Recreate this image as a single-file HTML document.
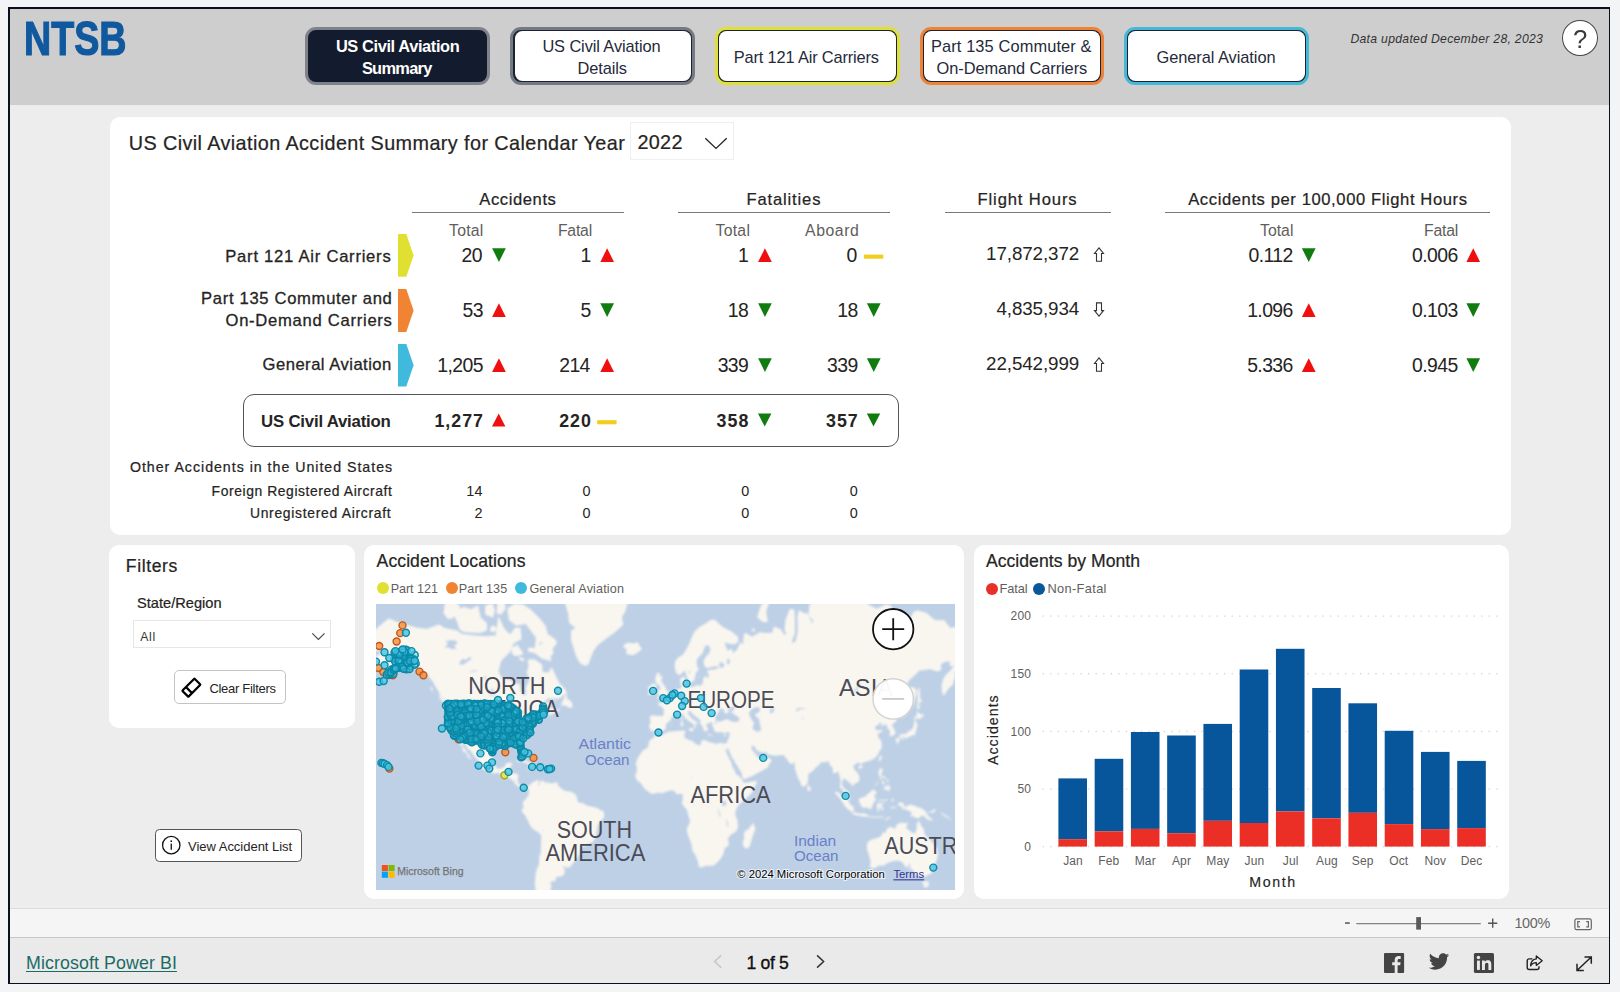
<!DOCTYPE html>
<html lang="en"><head><meta charset="utf-8"><title>NTSB US Civil Aviation Accident Summary</title>
<style>
html,body{margin:0;padding:0}
body{width:1620px;height:992px;overflow:hidden;background:#f3f4f6;position:relative;font-family:"Liberation Sans",sans-serif}
#frame{position:absolute;left:8px;top:7px;width:1599px;height:974px;border-style:solid;border-color:#0b1020;border-width:2px 1px 1px 2px}
.t{position:absolute;white-space:nowrap;line-height:normal;display:block}
svg{overflow:visible}
</style></head>
<body>
<div id="frame"></div>
<div style="position:absolute;left:10px;top:9px;width:1599px;height:96px;background:#cecece"></div>
<div style="position:absolute;left:10px;top:105px;width:1599px;height:803.5px;background:#ededed"></div>
<div style="position:absolute;left:10px;top:908px;width:1599px;height:29.5px;background:#f5f5f5;border-top:1px solid #dcdcdc;box-sizing:border-box"></div>
<div style="position:absolute;left:10px;top:937px;width:1599px;height:46px;background:#eaeaea;border-top:1px solid #c8c8c8;box-sizing:border-box"></div>
<div style="position:absolute;left:110px;top:116.5px;width:1401px;height:418px;background:#fff;border-radius:10px"></div>
<div style="position:absolute;left:108.6px;top:545px;width:246.5px;height:182.8px;background:#fff;border-radius:10px"></div>
<div style="position:absolute;left:364.3px;top:545px;width:600px;height:354px;background:#fff;border-radius:10px"></div>
<div style="position:absolute;left:974.3px;top:545px;width:534.8px;height:354px;background:#fff;border-radius:10px"></div>
<div style="position:absolute;left:305.3px;top:26.8px;width:185.09999999999997px;height:58.60000000000001px;box-sizing:border-box;border:3px solid #7f828a;border-radius:11px;background:#131c2e"></div>
<div style="position:absolute;left:510.4px;top:26.8px;width:184.70000000000005px;height:58.60000000000001px;box-sizing:border-box;border:3px solid #747a82;border-radius:11px;background:#1c2333"></div>
<div style="position:absolute;left:514.5px;top:30.9px;width:176.50000000000006px;height:50.400000000000006px;border-radius:7.5px;background:#fff"></div>
<div style="position:absolute;left:715.1px;top:26.8px;width:184.69999999999993px;height:58.60000000000001px;box-sizing:border-box;border:3px solid #dfe03a;border-radius:11px;background:#1c2333"></div>
<div style="position:absolute;left:719.2px;top:30.9px;width:176.49999999999994px;height:50.400000000000006px;border-radius:7.5px;background:#fff"></div>
<div style="position:absolute;left:919.5px;top:26.8px;width:184.5999999999999px;height:58.60000000000001px;box-sizing:border-box;border:3px solid #ee8336;border-radius:11px;background:#1c2333"></div>
<div style="position:absolute;left:923.6px;top:30.9px;width:176.39999999999992px;height:50.400000000000006px;border-radius:7.5px;background:#fff"></div>
<div style="position:absolute;left:1124.1px;top:26.8px;width:185.0px;height:58.60000000000001px;box-sizing:border-box;border:3px solid #45b8d8;border-radius:11px;background:#1c2333"></div>
<div style="position:absolute;left:1128.1999999999998px;top:30.9px;width:176.8px;height:50.400000000000006px;border-radius:7.5px;background:#fff"></div>
<div style="position:absolute;left:1561.6px;top:19.5px;width:36.6px;height:36.4px;box-sizing:border-box;border:1.2px solid #444;border-radius:50%;background:#fff"></div>
<div style="position:absolute;left:630.4px;top:122.4px;width:104px;height:37.3px;box-sizing:border-box;border:1px solid #efefef;background:#fff"></div>
<svg style="position:absolute;left:700px;top:132px" width="32" height="22" viewBox="700 132 32 22"><polyline points="705.3,138.2 716,148.4 726.7,138.2" fill="none" stroke="#252423" stroke-width="1.3"/></svg>
<div style="position:absolute;left:411.5px;top:211.8px;width:212.20000000000005px;height:1.3px;background:#7a7a7a"></div>
<div style="position:absolute;left:678px;top:211.8px;width:212px;height:1.3px;background:#7a7a7a"></div>
<div style="position:absolute;left:945.4px;top:211.8px;width:165.19999999999993px;height:1.3px;background:#7a7a7a"></div>
<div style="position:absolute;left:1165.1px;top:211.8px;width:324.9000000000001px;height:1.3px;background:#7a7a7a"></div>
<svg style="position:absolute;left:396px;top:233px" width="20" height="44.80000000000001" viewBox="396 233 20 44.80000000000001"><polygon points="398,234 406.3,234 413.6,255.4 406.3,276.8 398,276.8" fill="#dfe02f"/></svg>
<svg style="position:absolute;left:396px;top:287.9px" width="20" height="45.10000000000002" viewBox="396 287.9 20 45.10000000000002"><polygon points="398,288.9 406.3,288.9 413.6,310.45 406.3,332 398,332" fill="#f08432"/></svg>
<svg style="position:absolute;left:396px;top:343.2px" width="20" height="44.60000000000002" viewBox="396 343.2 20 44.60000000000002"><polygon points="398,344.2 406.3,344.2 413.6,365.5 406.3,386.8 398,386.8" fill="#3fb9dc"/></svg>
<div style="position:absolute;left:242.8px;top:394.3px;width:656px;height:52.8px;box-sizing:border-box;border:1.1px solid #555;border-radius:11px"></div>
<svg style="position:absolute;left:400px;top:230px" width="1100" height="220" viewBox="400 230 1100 220"><polygon points="492.09999999999997,248.3 505.79999999999995,248.3 498.94999999999993,261.9" fill="#107c10"/><polygon points="600.3000000000001,261.9 614.0,261.9 607.1500000000001,248.3" fill="#f00f0f"/><polygon points="758.1,261.9 771.8,261.9 764.95,248.3" fill="#f00f0f"/><rect x="863.9" y="254.6" width="19.4" height="4.1" fill="#f2cd1e"/><polygon points="1099.0,247.9 1103.5,253.5 1101.5,253.5 1101.5,261.2 1096.5,261.2 1096.5,253.5 1094.5,253.5" fill="#fff" stroke="#333" stroke-width="1.1" stroke-linejoin="miter"/><polygon points="1301.9,248.3 1315.6000000000001,248.3 1308.75,261.9" fill="#107c10"/><polygon points="1466.4,261.9 1480.1000000000001,261.9 1473.25,248.3" fill="#f00f0f"/><polygon points="492.09999999999997,316.9 505.79999999999995,316.9 498.94999999999993,303.3" fill="#f00f0f"/><polygon points="600.3000000000001,303.3 614.0,303.3 607.1500000000001,316.9" fill="#107c10"/><polygon points="758.1,303.3 771.8,303.3 764.95,316.9" fill="#107c10"/><polygon points="866.9000000000001,303.3 880.6,303.3 873.75,316.9" fill="#107c10"/><polygon points="1099.0,316.2 1103.5,310.6 1101.5,310.6 1101.5,302.9 1096.5,302.9 1096.5,310.6 1094.5,310.6" fill="#fff" stroke="#333" stroke-width="1.1" stroke-linejoin="miter"/><polygon points="1301.9,316.9 1315.6000000000001,316.9 1308.75,303.3" fill="#f00f0f"/><polygon points="1466.4,303.3 1480.1000000000001,303.3 1473.25,316.9" fill="#107c10"/><polygon points="492.09999999999997,371.9 505.79999999999995,371.9 498.94999999999993,358.3" fill="#f00f0f"/><polygon points="600.3000000000001,371.9 614.0,371.9 607.1500000000001,358.3" fill="#f00f0f"/><polygon points="758.1,358.3 771.8,358.3 764.95,371.9" fill="#107c10"/><polygon points="866.9000000000001,358.3 880.6,358.3 873.75,371.9" fill="#107c10"/><polygon points="1099.0,357.9 1103.5,363.5 1101.5,363.5 1101.5,371.2 1096.5,371.2 1096.5,363.5 1094.5,363.5" fill="#fff" stroke="#333" stroke-width="1.1" stroke-linejoin="miter"/><polygon points="1301.9,371.9 1315.6000000000001,371.9 1308.75,358.3" fill="#f00f0f"/><polygon points="1466.4,358.3 1480.1000000000001,358.3 1473.25,371.9" fill="#107c10"/><polygon points="492.0,426.6 505.4,426.6 498.7,413.6" fill="#f00f0f"/><rect x="597.2" y="420.2" width="19.4" height="4.1" fill="#f2cd1e"/><polygon points="758.0,413.6 771.4,413.6 764.7,426.6" fill="#107c10"/><polygon points="866.8000000000001,413.6 880.2,413.6 873.5,426.6" fill="#107c10"/></svg>
<div style="position:absolute;left:133.3px;top:620.1px;width:198.2px;height:28px;box-sizing:border-box;border:1px solid #e6e6e6;background:#fff"></div>
<svg style="position:absolute;left:308px;top:628px" width="22" height="16" viewBox="308 628 22 16"><polyline points="312.3,633.4 318.4,639.4 324.5,633.4" fill="none" stroke="#444" stroke-width="1.1"/></svg>
<div style="position:absolute;left:174.3px;top:670.4px;width:111.3px;height:34.1px;box-sizing:border-box;border:1.4px solid #c4c4c4;border-radius:5px;background:#fff"></div>
<svg style="position:absolute;left:178px;top:674px" width="28" height="28" viewBox="178 674 28 28"><g transform="translate(191.4,687.7) rotate(-45)" fill="none" stroke="#000" stroke-width="2.2"><rect x="-8.6" y="-4.3" width="17.2" height="8.6" rx="0.6"/><line x1="-3.4" y1="-4.3" x2="-3.4" y2="4.3"/></g></svg>
<div style="position:absolute;left:155px;top:829.2px;width:147px;height:33px;box-sizing:border-box;border:1.3px solid #555;border-radius:4.5px;background:#fff"></div>
<svg style="position:absolute;left:160px;top:834px" width="24" height="24" viewBox="160 834 24 24"><circle cx="171.25" cy="845.15" r="8.7" fill="none" stroke="#111" stroke-width="1.3"/><rect x="170.6" y="843.6" width="1.3" height="6.2" fill="#111"/><rect x="170.5" y="840.4" width="1.5" height="1.6" fill="#111"/></svg>
<div style="position:absolute;left:376.8px;top:582.4px;width:12px;height:12px;border-radius:50%;background:#dfe02f"></div>
<div style="position:absolute;left:445.5px;top:582.4px;width:12px;height:12px;border-radius:50%;background:#f08432"></div>
<div style="position:absolute;left:514.8px;top:582.4px;width:12px;height:12px;border-radius:50%;background:#3fb9dc"></div>
<svg style="position:absolute;left:376px;top:604px;overflow:hidden;font-family:&quot;Liberation Sans&quot;,sans-serif" width="579" height="286" viewBox="376 604 579 286"><defs><filter id="soft" x="-5%" y="-5%" width="110%" height="110%"><feGaussianBlur stdDeviation="1.0"/></filter></defs>
<g filter="url(#soft)"><rect x="356" y="584" width="619" height="326" fill="#bdd0e6"/>
<path d="M368.2,646.2 371.7,634.0 377.1,628.1 388.6,618.5 400.1,622.9 416.0,627.6 426.7,629.1 439.1,624.5 444.4,628.1 456.8,630.6 462.1,634.0 474.5,635.4 485.2,636.3 495.8,635.4 498.4,615.7 503.8,628.1 510.0,634.4 515.3,627.6 520.6,628.1 521.5,639.1 513.5,643.6 510.0,652.1 501.1,660.7 498.4,671.5 502.0,678.2 510.0,679.8 515.3,683.6 519.7,684.2 520.6,690.5 523.3,695.5 525.9,694.9 525.9,687.6 529.5,679.8 526.8,672.5 528.6,666.2 527.7,659.5 534.8,659.5 541.9,664.4 542.7,672.2 548.9,672.2 551.6,666.9 556.0,676.5 559.6,683.6 564.9,689.1 567.0,693.5 563.1,695.5 559.6,698.5 548.1,698.5 544.5,701.8 541.0,706.3 542.7,705.0 550.7,701.3 552.0,702.6 549.8,705.3 551.3,708.4 553.4,709.7 556.9,710.4 559.6,707.6 558.7,711.0 552.5,714.0 548.9,715.7 548.9,713.5 551.1,711.2 547.2,712.2 541.9,715.4 540.6,718.3 541.9,720.0 539.2,721.0 534.8,722.8 534.4,725.4 532.1,727.7 531.2,731.0 531.8,734.3 528.6,736.9 525.0,739.7 522.4,742.8 521.8,745.9 523.8,752.0 523.8,755.3 522.4,755.7 521.0,753.4 519.4,750.4 519.2,747.6 517.1,745.9 514.4,746.3 510.8,745.1 507.3,745.5 507.7,747.8 504.6,747.4 499.7,746.5 497.6,747.6 494.0,750.4 493.5,754.0 492.8,757.9 492.6,761.1 494.0,764.6 495.8,767.0 498.4,768.9 502.9,768.0 505.2,766.5 505.7,763.6 510.0,762.5 512.1,763.1 510.8,766.5 510.0,768.3 509.4,772.0 508.5,773.3 513.5,773.2 517.9,774.3 518.1,776.6 517.6,781.2 518.8,783.9 520.6,785.7 524.1,785.3 525.9,784.8 528.6,786.2 528.7,788.0 527.3,786.9 525.0,785.9 523.6,787.1 523.3,788.7 521.1,788.0 518.8,786.9 517.6,786.0 515.3,783.9 513.9,782.1 510.8,778.5 507.3,777.6 503.8,776.6 500.2,773.5 497.9,772.6 494.9,773.5 490.5,771.9 486.0,770.2 482.1,768.3 479.0,765.5 479.3,762.7 477.2,759.2 473.6,755.3 471.9,752.6 470.1,750.2 467.1,748.0 465.7,743.9 462.7,742.4 462.7,745.9 465.7,750.0 468.3,754.0 470.1,757.3 471.9,759.4 470.6,759.4 467.4,756.5 466.9,753.6 463.5,751.6 462.1,750.0 463.0,748.2 460.7,745.3 459.1,742.4 458.2,740.5 456.1,738.0 452.4,736.5 449.9,731.9 448.8,729.3 446.5,725.4 445.6,723.3 445.8,719.5 446.2,713.5 446.2,709.2 444.9,703.4 447.9,704.0 448.8,705.8 448.7,702.4 447.6,701.0 444.4,698.3 440.0,696.3 439.1,692.0 435.5,686.7 433.8,683.0 430.2,678.2 425.8,673.2 422.2,672.2 418.2,669.0 410.7,668.0 406.3,665.1 402.8,668.0 400.1,669.7 396.9,670.4 397.4,666.2 400.1,663.7 396.6,665.1 393.9,669.7 392.1,672.2 388.6,677.2 385.0,680.7 380.6,683.6 376.2,685.1 378.8,682.0 382.4,679.8 385.9,675.5 387.2,672.2 384.2,672.8 378.8,672.5 378.8,668.0 374.4,666.2 371.7,661.8 373.5,657.6 376.2,656.1 380.6,653.7 380.6,650.8 377.1,650.8 371.7,650.4ZM447.1,703.4 443.5,702.1 438.6,697.4 440.9,696.9 444.4,699.1 446.7,701.8ZM433.4,692.9 431.1,690.0 430.2,687.3 432.4,687.6 432.4,690.5ZM392.1,676.5 395.7,674.9 396.0,677.2 393.4,678.8ZM550.7,661.1 541.9,658.4 534.8,652.9 527.7,651.6 528.6,647.5 534.8,647.9 536.0,637.7 529.5,629.1 525.9,623.9 516.2,625.5 509.1,620.2 507.3,608.7 514.4,603.8 523.3,604.4 531.2,609.9 540.1,619.1 545.4,625.5 547.7,634.0 556.0,640.0 556.9,643.2 552.5,648.7 553.4,652.9 550.4,656.8 551.3,659.5ZM486.9,630.6 479.8,633.0 471.0,632.5 463.9,632.0 459.5,629.6 457.7,622.9 455.0,617.4 457.7,609.9 463.9,606.9 471.0,609.3 478.1,605.6 480.7,617.4 486.9,622.9ZM447.9,619.1 443.5,612.9 445.3,601.2 453.3,599.9 460.3,606.9 456.8,614.6 452.4,618.5ZM493.1,617.4 485.2,614.6 485.2,605.6 492.2,603.1 494.9,609.9ZM496.7,613.5 501.1,614.6 505.5,608.7 504.6,601.2 497.6,601.2ZM489.6,630.6 494.0,632.5 496.7,629.6 494.9,626.0 491.4,626.0ZM458.6,595.8 471.0,599.2 478.1,595.8 478.1,586.5 467.4,585.0 458.6,588.8ZM502.9,597.9 524.1,598.5 524.1,590.2 510.0,585.0 502.9,588.8ZM511.7,647.5 515.3,646.2 517.1,644.5 521.5,650.8 523.3,654.1 518.8,655.7 514.4,655.7 511.7,652.9ZM518.8,657.2 521.5,657.2 524.5,659.5 523.3,661.4 519.7,659.5ZM560.8,705.5 562.6,701.3 564.9,696.3 567.4,694.6 566.7,699.1 570.2,700.5 572.0,703.2 572.5,706.3 571.1,708.1 567.6,707.1 565.8,705.5ZM551.6,699.4 556.0,700.7 556.6,701.5 553.4,701.0ZM552.0,707.6 556.0,708.4 555.1,709.7 552.5,708.9ZM585.3,665.8 580.0,663.3 576.4,656.8 573.8,648.7 571.1,640.0 571.1,630.6 575.5,628.1 569.3,622.9 568.4,614.6 564.9,602.5 559.6,588.8 545.4,587.3 538.3,573.0 559.6,531.6 612.7,510.5 634.0,554.3 631.3,588.8 628.7,599.2 625.1,611.7 621.6,617.4 623.4,624.5 614.5,632.5 605.7,638.7 597.7,645.3 593.2,651.6 590.1,659.5 588.3,664.4ZM622.8,646.6 626.9,642.7 634.0,643.6 637.5,642.3 640.0,646.6 641.8,648.7 639.3,651.6 633.1,655.3 626.0,653.7 626.9,649.6ZM515.3,761.9 518.8,759.8 522.4,759.4 525.9,760.8 529.5,762.3 532.1,764.0 534.4,765.1 533.0,765.7 528.2,765.9 529.1,764.4 526.8,763.6 524.1,762.3 521.0,761.3 517.9,761.3 516.2,762.1ZM534.1,768.5 536.5,768.9 539.2,769.8 541.9,768.7 544.5,768.9 544.9,768.1 542.7,766.8 541.0,765.9 538.8,765.9 535.8,765.9 536.9,766.8 537.6,768.1 535.7,768.1ZM527.0,768.7 530.7,768.9 530.9,769.5 529.1,769.8 527.2,769.1ZM546.8,768.3 549.7,768.5 549.5,769.3 546.8,769.4ZM528.7,786.2 532.1,782.8 533.4,781.9 538.3,779.9 539.6,782.1 541.9,781.0 541.9,779.9 544.9,782.4 548.9,782.8 551.6,783.5 556.0,782.6 557.8,784.8 558.7,786.6 562.2,789.3 564.9,791.0 570.2,791.4 573.8,793.2 575.5,794.6 577.3,798.5 577.3,801.7 580.0,802.9 582.6,802.9 587.0,805.8 592.4,806.8 597.7,808.3 600.3,810.2 603.3,811.1 604.2,814.5 603.9,817.7 600.3,821.3 597.7,824.9 596.8,829.5 596.4,834.1 595.0,837.9 593.2,841.7 589.7,843.6 586.2,845.1 582.6,846.9 580.0,849.4 579.6,854.0 577.3,857.5 573.8,862.0 571.1,865.8 568.4,867.8 564.9,866.9 562.6,866.3 564.9,870.2 564.0,874.6 561.4,876.2 556.0,876.9 555.5,881.0 550.7,881.5 550.7,885.1 551.6,886.3 549.8,891.2 546.3,893.7 548.9,897.6 546.3,902.9 543.6,907.1 544.9,911.4 541.9,911.4 540.1,915.2 535.7,911.4 533.0,907.1 532.1,900.2 533.9,895.8 535.7,888.7 534.8,883.9 535.3,879.2 535.7,873.5 536.9,869.1 539.2,863.7 539.2,857.5 541.0,851.4 541.0,844.6 541.3,837.9 541.2,834.7 538.3,832.3 533.0,829.1 530.7,826.4 529.1,823.1 526.8,818.6 525.0,815.0 522.4,812.4 521.8,809.3 523.6,807.7 524.1,806.1 522.4,805.6 523.3,802.6 524.1,800.3 526.3,799.0 526.8,797.3 528.6,795.5 528.9,791.9 528.6,789.3ZM556.2,782.6 558.0,782.4 557.8,783.7 556.2,783.7ZM655.4,733.7 662.4,735.0 667.7,732.1 671.2,731.5 678.3,731.0 683.6,730.4 685.4,731.0 684.5,734.3 684.0,736.9 685.4,738.6 688.9,739.9 693.0,741.2 694.3,743.3 697.8,744.9 700.5,745.3 701.3,742.8 701.3,740.7 704.9,739.9 707.5,741.4 710.2,742.4 713.7,743.3 717.3,743.9 719.9,742.8 722.6,743.3 723.5,745.9 725.3,750.0 727.0,754.0 728.8,757.9 731.5,762.7 732.0,766.5 734.1,769.3 735.9,773.9 738.6,775.7 741.6,779.0 742.6,780.8 743.9,783.0 747.4,782.4 752.7,781.5 756.6,780.6 756.3,783.0 754.5,787.5 752.7,791.0 751.0,793.7 747.4,797.3 743.9,799.9 741.2,802.6 738.6,805.2 736.8,807.9 735.9,810.6 735.0,813.8 735.9,816.8 737.5,820.4 737.8,824.9 737.8,828.6 735.0,832.3 731.5,834.1 728.8,836.9 727.6,838.8 728.6,841.7 728.6,845.5 724.4,848.5 724.0,851.4 722.6,855.4 719.9,859.5 716.4,863.3 713.7,865.2 711.1,865.8 705.8,865.8 701.3,867.6 698.7,866.5 698.3,862.7 696.9,858.5 695.1,854.4 692.5,850.4 691.6,844.6 690.7,841.7 688.0,835.1 686.8,830.4 688.0,825.8 689.8,823.1 690.2,820.4 688.9,817.4 687.7,812.4 686.8,809.7 683.6,806.1 681.8,803.5 682.7,799.9 682.7,796.4 683.1,794.6 681.0,793.7 678.3,794.1 676.5,794.1 674.8,791.4 672.1,790.3 668.0,790.9 664.1,792.5 662.4,793.2 660.6,792.7 657.9,792.5 652.6,793.9 650.0,792.8 645.5,789.6 642.9,786.6 642.0,784.4 639.3,782.1 636.3,779.6 636.1,777.6 634.9,775.4 636.7,773.0 637.0,769.3 636.7,766.5 635.8,763.6 637.5,758.8 639.7,754.9 642.9,750.4 646.4,748.4 648.2,746.9 648.7,743.9 649.4,740.7 652.6,738.4 654.4,736.9ZM753.3,823.1 755.4,829.5 753.6,833.2 751.8,838.8 750.1,844.6 749.2,847.5 746.0,848.5 743.9,847.1 742.6,842.6 744.4,838.3 743.9,835.1 744.8,831.0 748.3,829.5 751.0,825.8ZM656.0,733.2 658.1,731.7 662.4,731.5 664.7,729.7 666.3,727.0 665.4,725.4 667.3,722.4 669.8,721.0 671.6,718.8 671.2,716.7 673.0,715.9 675.3,716.4 677.4,716.9 679.2,715.2 681.5,713.7 684.0,714.9 684.5,717.4 686.6,719.1 687.7,720.3 689.8,721.4 691.2,722.4 693.7,724.2 694.3,726.5 693.7,728.8 695.1,727.7 696.2,726.5 695.3,724.9 696.0,723.1 698.5,724.2 697.8,722.6 694.3,720.7 694.3,719.8 691.9,719.1 690.0,715.9 687.9,714.2 687.7,711.5 690.2,710.4 690.0,712.2 691.6,711.7 692.8,714.2 695.1,715.9 697.8,718.1 700.3,720.0 700.3,723.1 701.3,724.9 703.1,727.2 703.6,729.9 704.9,731.5 706.3,732.1 706.8,729.9 708.4,729.5 707.5,727.7 706.3,725.9 706.1,723.3 708.4,724.2 709.3,722.1 712.0,722.4 712.5,724.0 712.3,725.4 713.4,727.7 714.3,729.9 714.6,731.5 716.4,731.7 718.2,732.8 720.3,731.5 723.5,733.0 726.1,732.4 728.8,731.9 729.9,733.2 729.5,735.4 729.3,736.7 728.5,738.6 727.7,740.7 727.0,742.8 725.3,743.7 723.1,743.5 723.5,746.1 725.3,749.6 726.5,750.4 727.9,746.9 728.8,750.0 730.6,754.0 731.8,757.3 734.1,760.2 735.2,762.7 737.7,766.5 739.4,769.6 741.6,772.4 742.1,775.7 743.0,779.0 745.6,778.8 751.0,776.6 754.5,774.8 758.4,772.6 761.6,771.1 764.2,769.3 768.1,767.4 768.7,764.6 771.9,760.8 769.9,758.6 766.9,757.5 765.8,755.9 765.8,753.4 765.1,754.4 763.7,755.5 761.6,757.5 758.0,757.9 757.2,756.9 757.3,754.4 756.3,754.0 755.7,755.9 754.9,754.4 754.5,752.6 752.7,750.8 751.8,749.0 751.0,746.9 752.0,745.9 753.6,745.7 755.4,747.6 756.3,750.0 758.9,751.2 762.5,752.8 765.7,751.8 766.9,752.6 768.3,754.7 771.3,755.1 775.1,755.7 779.3,755.3 783.7,755.1 784.6,756.3 786.4,758.5 788.2,761.1 790.5,764.0 793.5,763.6 794.5,761.3 794.9,763.6 794.9,767.4 795.8,771.1 796.7,773.9 798.3,778.5 800.2,781.5 801.1,784.8 803.2,787.3 804.5,785.9 806.2,785.1 807.3,783.3 808.2,778.5 808.0,774.3 810.3,772.4 811.7,771.7 814.7,768.7 816.5,766.8 819.2,765.0 820.1,762.7 822.7,762.3 826.3,761.7 828.6,761.1 829.5,764.2 831.6,766.5 833.0,769.3 833.0,773.0 834.8,773.3 837.4,771.5 838.8,772.4 839.2,774.8 839.9,777.6 840.6,780.3 840.4,783.9 839.9,786.6 840.3,787.8 842.2,789.3 843.6,791.0 843.8,792.8 844.3,795.1 845.6,796.9 847.5,798.2 849.3,799.4 850.5,799.2 849.3,796.7 849.1,794.6 849.1,792.8 847.5,791.0 845.8,789.6 844.0,788.7 843.1,786.6 841.9,785.1 841.9,782.1 843.1,780.3 843.1,777.9 844.9,779.0 847.0,780.3 848.4,782.1 849.5,783.0 851.6,783.2 851.6,786.2 852.8,785.7 855.0,783.3 856.4,783.0 859.0,781.2 859.6,778.5 859.0,775.7 857.6,773.0 855.5,771.1 853.7,768.3 853.2,766.5 854.8,764.6 857.3,762.7 859.9,762.7 860.8,765.0 861.7,763.2 864.4,762.3 867.0,761.3 868.4,761.0 871.5,760.0 874.1,758.5 875.9,756.7 878.0,754.4 878.5,752.4 880.3,750.0 881.7,746.9 882.1,745.5 880.3,744.7 881.9,743.9 881.2,741.8 879.4,738.6 877.7,736.1 877.3,735.0 879.4,732.8 883.0,731.0 880.8,729.7 876.8,730.4 875.0,728.1 874.5,726.5 876.8,725.9 880.3,722.4 882.1,723.1 880.8,726.5 883.9,724.9 886.2,724.2 887.4,726.5 887.4,728.8 889.7,729.9 890.1,732.1 889.7,736.1 891.8,736.1 894.5,735.0 895.4,732.1 893.6,728.1 891.8,725.4 892.7,723.8 895.7,721.9 896.3,718.8 898.0,717.9 899.8,716.7 902.5,717.6 906.0,714.7 908.7,711.0 911.3,707.1 914.0,703.2 914.9,697.7 916.3,692.6 916.3,690.0 914.0,687.6 910.4,687.6 908.7,686.7 906.0,685.4 909.5,679.8 914.9,674.9 919.3,670.4 924.6,670.1 929.9,669.0 934.4,670.4 937.0,671.5 941.4,669.7 940.6,664.4 945.0,661.8 950.3,661.4 949.4,665.5 953.0,666.2 955.6,662.5 956.5,658.8 954.7,664.4 951.2,669.7 945.9,674.9 943.6,678.2 941.8,684.5 941.8,690.5 943.2,695.7 946.4,692.0 947.1,690.5 949.4,687.6 953.0,684.5 953.8,680.7 955.3,676.5 954.7,673.2 957.4,669.7 960.1,668.0 967.1,668.0 970.7,664.4 975.1,661.4 980.4,658.8 984.0,658.8 983.1,650.8 984.9,648.7 984.9,630.6 977.8,627.0 968.9,625.5 967.1,630.6 963.6,627.0 954.7,627.0 950.3,628.1 944.1,620.2 935.2,620.2 931.7,617.4 926.4,612.9 917.5,610.5 914.0,611.7 910.4,617.4 901.6,617.4 896.3,620.2 894.5,614.6 890.9,605.6 885.6,604.4 876.8,608.7 867.9,604.4 866.1,599.2 852.0,573.0 834.2,588.8 820.1,595.8 809.4,605.0 808.5,615.7 813.0,620.2 813.0,624.5 809.4,617.4 806.8,612.9 804.1,613.5 798.8,609.9 797.4,617.4 797.9,630.6 796.1,640.0 793.5,643.2 791.7,641.8 794.9,633.0 794.9,620.2 794.4,609.9 789.9,608.7 785.5,620.2 784.6,631.5 787.3,634.0 783.7,634.4 781.1,629.6 774.0,626.5 772.2,633.0 763.4,633.0 760.7,632.0 751.8,636.8 747.4,634.0 744.4,633.0 743.0,642.3 743.9,644.5 740.3,642.7 736.8,650.0 733.2,652.9 731.5,648.7 727.4,650.8 724.4,642.3 727.9,643.2 734.1,644.5 738.6,641.4 737.7,636.8 731.5,631.5 725.3,628.6 720.8,625.5 715.5,620.2 711.4,619.6 704.9,623.9 699.6,627.0 694.3,632.0 691.6,637.7 688.9,644.5 686.3,649.6 682.7,654.9 678.3,657.6 675.1,661.4 674.8,666.2 675.6,671.5 678.3,674.9 681.0,673.9 684.5,670.4 685.4,671.5 685.9,673.9 687.2,677.2 688.4,681.4 688.9,683.3 691.2,683.0 691.6,681.4 694.3,680.4 695.1,676.5 696.0,672.5 698.7,669.7 696.9,665.5 696.4,660.7 698.7,656.8 702.2,653.7 704.0,648.7 705.4,645.3 708.4,645.3 710.7,648.7 709.3,652.9 705.8,656.8 703.6,660.7 704.0,664.4 704.9,666.6 706.7,668.3 710.2,667.3 714.6,666.2 716.8,666.2 719.4,668.0 716.4,669.0 713.7,669.7 709.7,669.7 707.5,670.8 707.5,673.2 709.1,673.9 708.8,677.2 707.5,678.2 705.9,675.9 704.0,676.9 703.1,679.8 703.1,683.6 701.3,684.8 700.5,686.4 698.3,685.1 695.1,686.0 691.2,687.6 689.8,686.0 687.2,687.0 685.4,687.6 685.0,686.7 683.6,686.0 683.3,684.5 684.2,681.4 685.2,679.8 684.2,676.2 682.7,677.5 680.4,678.2 680.3,681.4 680.4,683.0 681.1,684.8 681.7,687.6 681.0,688.8 678.3,689.1 676.9,689.4 674.4,690.5 673.3,693.5 672.1,695.2 670.3,696.0 668.7,697.1 668.6,698.8 666.3,700.2 663.8,700.7 663.2,699.9 662.7,702.6 660.6,702.4 657.6,703.2 658.3,705.0 660.9,706.1 662.4,707.6 663.8,709.2 663.8,712.2 663.6,714.7 662.9,716.2 659.7,715.9 655.8,715.7 651.7,715.3 649.6,716.9 650.3,719.5 650.5,722.4 649.2,725.9 649.1,727.2 650.3,727.9 650.3,729.9 650.0,731.0 652.8,730.6 654.7,731.9ZM685.4,682.3 688.0,681.1 688.2,683.3 687.2,684.8 685.7,683.9ZM683.3,683.0 684.9,682.6 685.0,684.2 683.6,684.2ZM698.2,677.8 699.6,675.2 699.4,677.2ZM655.8,699.1 659.7,698.3 660.6,697.1 663.2,697.1 666.8,696.9 668.4,695.7 667.3,694.9 668.9,691.7 666.4,690.5 666.1,688.8 665.0,686.4 663.2,684.5 662.4,682.0 660.6,681.4 661.5,679.8 662.4,676.5 662.7,676.2 659.7,675.9 658.8,676.2 660.2,673.2 657.0,672.8 656.2,675.5 655.6,678.2 654.9,679.8 656.2,681.4 655.8,683.6 657.4,683.0 657.0,685.1 659.7,684.8 659.7,686.7 660.8,687.9 660.4,689.4 657.9,689.7 658.3,691.1 658.8,692.3 656.7,693.7 658.8,694.6 660.6,694.9 660.9,695.2 658.5,695.7 657.0,698.0ZM648.2,694.6 650.8,694.6 654.7,692.9 655.3,689.7 656.2,686.0 654.9,683.9 652.6,683.6 650.8,685.7 648.2,687.0 648.5,689.7 649.4,691.7 647.6,693.2ZM687.9,728.8 693.5,728.1 692.7,731.7 689.8,730.6ZM680.4,721.9 682.9,721.4 683.1,725.9 681.0,726.8 680.8,724.2ZM681.1,718.6 682.6,717.1 682.7,719.5 682.2,721.0 681.3,720.3ZM707.5,734.3 712.5,734.8 712.3,735.4 708.4,735.4 707.5,735.0ZM723.1,735.4 725.3,734.6 727.2,733.9 726.1,735.4 724.4,736.3ZM670.2,725.2 671.6,724.4 671.9,725.4 671.2,725.9ZM757.2,617.4 759.8,608.7 764.2,599.2 768.7,592.4 777.5,585.0 787.3,581.2 784.6,588.8 774.0,595.8 768.7,603.8 766.0,611.7 767.8,621.8 763.4,622.3 760.7,620.2ZM751.5,630.6 753.6,628.1 755.0,630.6 753.3,632.0ZM897.9,737.6 900.7,734.6 903.3,734.1 906.9,733.7 908.3,730.4 909.2,731.5 911.3,730.1 913.1,727.7 914.0,724.7 914.0,722.6 914.5,721.4 916.5,721.0 916.6,723.1 917.5,725.4 916.6,728.1 915.8,731.0 915.2,733.2 915.6,733.9 914.0,735.4 913.4,734.6 912.2,735.4 911.9,736.3 910.8,736.3 908.7,736.3 908.5,736.9 907.4,738.0 906.5,738.7 905.3,737.8 905.5,736.9 903.3,736.3 901.6,736.9 900.3,737.1 898.9,737.6ZM897.9,737.8 899.3,738.4 899.6,739.7 898.9,741.8 898.2,743.3 897.3,743.7 896.6,743.0 896.6,741.2 895.7,740.3 895.9,738.6 897.0,738.2ZM900.7,737.8 903.3,736.9 904.6,738.0 903.7,739.1 902.5,738.6 901.6,740.1 900.5,739.1ZM914.5,720.7 914.0,718.8 914.9,716.7 916.3,716.4 917.0,713.5 917.2,711.2 919.3,713.5 921.6,714.7 923.4,714.0 923.9,716.4 921.6,717.1 919.8,719.5 917.5,718.1 915.8,718.6 914.9,719.5 915.9,720.0ZM917.5,709.7 920.2,707.6 918.9,705.8 919.7,701.8 922.3,701.8 919.8,697.7 919.8,692.0 919.3,686.7 918.1,689.1 917.2,693.5 917.7,699.1 917.5,704.5 917.3,708.1ZM880.3,755.5 882.1,755.9 881.2,758.8 880.0,761.7 878.9,760.2 878.9,758.3 880.0,756.5ZM858.5,766.8 859.9,765.5 862.2,765.5 862.6,766.5 861.4,768.3 859.9,768.9 858.5,768.1ZM807.7,784.4 809.3,786.2 810.8,788.4 810.5,790.3 808.7,791.2 807.5,790.2 807.3,787.5ZM834.8,791.8 838.7,792.5 840.8,795.0 843.6,797.3 845.8,798.7 849.3,801.7 849.3,803.5 851.1,805.2 853.7,807.0 853.6,812.0 851.3,812.0 850.2,810.6 847.2,808.8 844.9,806.1 843.6,803.5 841.3,800.8 840.8,798.7 838.7,797.3 836.9,795.1 834.8,792.8ZM852.3,813.8 853.7,812.2 855.5,812.4 858.2,813.2 861.7,814.0 862.4,813.1 865.6,814.1 868.8,815.4 868.6,817.2 866.1,816.6 862.6,816.5 859.0,815.6 857.3,815.6 854.6,814.8ZM869.0,816.3 870.9,816.3 872.7,816.6 872.3,817.5 870.0,817.4ZM872.9,816.8 876.8,816.5 880.3,816.6 883.9,816.5 883.5,817.4 878.5,817.4 873.2,817.7ZM884.7,820.1 887.4,817.7 891.3,816.6 890.1,817.7 886.5,819.9ZM860.1,798.0 863.3,797.3 866.1,796.0 867.9,793.7 869.7,792.8 871.5,791.0 872.7,789.3 874.5,790.3 875.2,791.4 877.1,792.5 875.9,793.9 874.6,794.4 874.1,795.5 875.0,797.8 876.8,799.9 874.6,800.3 874.1,802.6 872.3,804.4 872.3,807.0 871.5,808.4 869.1,809.0 868.8,807.7 866.1,807.6 864.0,807.7 861.4,806.8 860.8,804.4 859.4,802.6 859.0,801.2 859.0,799.6ZM877.5,811.3 879.2,811.5 879.2,807.0 880.3,806.5 880.8,808.8 882.1,810.2 883.7,809.3 882.6,807.6 881.2,805.2 883.0,804.4 884.6,803.3 881.2,803.3 880.0,804.0 878.5,802.9 878.9,801.2 880.3,800.8 883.9,801.0 886.5,800.8 887.8,799.0 886.5,799.4 883.9,800.0 880.3,799.8 879.1,799.9 878.4,801.2 878.2,803.1 877.3,804.4 876.6,806.5 877.5,807.9ZM891.8,798.2 892.7,799.0 894.0,799.9 892.7,801.2 892.4,802.9 891.8,800.8ZM889.2,807.4 890.9,807.4 892.7,806.8 897.7,807.6 895.4,807.9 892.7,807.9 890.1,808.3ZM898.0,803.1 900.7,802.4 903.3,803.1 904.2,806.1 905.1,807.6 907.8,805.6 910.4,804.7 915.2,806.1 918.4,807.6 922.0,808.4 924.3,810.6 926.4,812.4 927.8,813.6 926.4,813.8 928.2,815.9 930.8,818.3 933.1,820.1 931.7,820.6 928.2,819.7 926.4,818.6 924.6,816.3 922.0,815.4 920.2,816.5 919.3,818.1 917.5,818.1 915.8,817.9 913.1,815.9 910.4,816.5 911.3,814.1 911.7,812.4 910.4,811.5 906.9,809.9 904.2,808.8 901.6,808.8 901.2,807.6 903.0,806.1 899.8,806.1 898.0,804.4ZM928.7,811.6 931.7,811.5 934.4,809.1 935.8,809.3 934.9,811.5 931.7,812.9 929.0,812.4ZM940.6,812.4 943.2,813.8 945.9,815.6 949.4,817.7 952.1,820.1 949.4,818.8 945.0,816.5 941.4,813.8ZM879.6,768.3 882.4,768.5 882.6,771.1 881.4,773.3 881.6,776.1 883.0,776.3 885.5,777.0 885.8,779.2 884.4,778.5 883.0,777.7 881.2,777.2 879.6,776.1 880.1,775.5 878.9,775.2 878.2,772.4 879.2,771.9 879.2,770.2ZM882.1,789.3 883.5,788.4 884.6,786.2 886.9,786.6 888.3,784.2 889.7,786.6 890.2,788.7 889.5,790.5 888.1,791.8 888.5,789.1 886.0,790.7 885.6,789.3 884.6,788.6 882.6,789.4ZM886.2,779.4 888.3,779.4 888.6,781.9 887.4,782.3 887.0,781.2ZM882.1,780.5 883.9,781.2 884.4,783.0 884.4,785.1 883.0,784.6 882.8,783.0 881.9,783.0ZM879.2,777.7 881.0,777.7 881.0,779.7 880.1,779.7ZM873.6,786.8 875.9,784.8 877.7,781.5 878.0,783.0 876.2,785.3 874.3,786.6ZM868.1,841.3 867.0,845.5 867.0,849.4 868.3,852.4 869.7,857.5 870.9,861.6 869.7,866.5 872.3,868.0 875.0,868.0 878.5,865.6 884.7,865.6 885.6,863.7 889.2,862.2 894.5,860.8 898.4,860.6 901.6,861.8 903.7,863.7 905.5,867.1 906.9,867.6 909.5,863.7 910.1,862.9 910.1,865.8 908.7,868.4 910.1,868.2 910.8,866.5 911.3,868.0 910.6,869.3 913.1,869.9 914.0,873.0 915.8,874.8 920.2,876.4 922.3,875.0 925.3,877.1 928.2,874.4 931.7,873.5 932.2,870.2 933.8,865.8 936.1,862.0 937.0,858.5 938.1,854.6 937.4,851.4 937.4,848.5 934.4,845.5 933.1,843.2 930.8,840.7 928.7,837.9 926.4,836.6 924.6,834.1 924.3,832.1 923.4,828.6 922.0,827.1 920.4,824.6 919.7,822.2 918.4,820.8 917.5,822.2 916.8,824.9 916.8,828.6 915.8,831.9 915.4,833.2 913.1,833.2 910.4,831.4 908.7,830.1 906.7,828.6 906.0,826.8 906.9,825.3 908.5,823.7 906.9,823.1 905.1,823.5 901.6,822.6 898.9,823.5 897.9,823.8 896.3,825.8 895.4,828.4 893.1,828.2 890.9,826.8 888.3,827.7 886.5,829.5 886.2,831.4 884.7,833.0 882.4,832.3 882.4,834.1 881.2,836.0 877.7,837.9 873.2,839.0 871.5,839.8 869.0,841.3ZM922.3,880.8 925.5,881.7 928.7,881.3 928.7,884.3 928.0,886.7 926.0,887.7 924.6,887.5 923.2,884.6 922.3,882.0ZM908.0,869.5 909.7,869.3 910.6,869.9 908.1,870.2ZM389.5,767.4 391.2,766.5 389.6,765.1ZM388.2,763.8 389.5,764.0 388.8,764.4ZM956.5,838.1 959.2,839.8 961.8,842.3 960.4,842.1 957.4,839.8ZM760.3,779.2 762.5,779.2 761.6,779.7ZM735.4,812.0 735.9,812.7 735.5,813.1ZM527.2,752.8 529.1,753.0 528.0,753.4ZM527.3,755.9 528.0,756.3 528.2,757.5 527.2,757.1Z" fill="#f9f6f0"/>
<path d="M715.5,720.7 717.3,721.4 721.7,721.4 725.3,719.5 727.9,719.5 730.6,721.2 734.1,721.9 736.8,721.9 739.6,720.5 739.4,718.3 736.8,715.9 733.2,713.5 731.5,712.2 730.8,711.5 728.6,712.2 726.1,713.7 725.3,713.2 723.5,711.2 725.3,709.7 722.6,709.2 720.8,708.1 719.1,710.2 718.5,711.7 716.8,714.7 715.5,716.4 715.0,718.3 715.5,719.5ZM727.9,711.0 727.9,708.9 730.6,707.6 733.2,706.6 735.5,706.6 734.1,709.2 732.9,711.0 730.9,711.5ZM713.7,722.8 715.5,721.9 717.8,722.4 716.9,723.3 714.6,723.3ZM750.1,711.0 752.7,708.4 756.3,707.1 759.8,707.6 759.8,711.5 756.8,713.5 755.0,714.0 756.3,717.1 758.9,718.3 759.5,720.7 759.8,724.2 760.7,726.5 761.2,730.4 759.8,731.3 756.3,731.7 754.5,730.1 752.7,729.5 752.6,727.7 753.3,725.4 753.6,723.5 755.0,723.5 753.6,722.6 751.8,720.0 750.1,717.1 749.2,714.7 748.8,713.0ZM769.6,711.0 771.3,708.4 774.0,708.1 774.5,710.2 772.2,713.2 769.9,713.2ZM796.1,710.7 797.6,707.9 800.6,707.9 805.0,707.9 805.9,708.9 801.5,708.9 798.4,710.2 797.0,711.7ZM849.7,694.9 853.7,692.6 857.3,689.7 860.3,684.5 860.6,682.0 859.0,683.3 856.4,688.5 853.7,691.1 851.1,693.7ZM720.8,668.2 724.0,666.9 724.4,664.8 722.6,662.5 719.9,662.2 718.7,664.0 719.6,666.2ZM727.0,664.4 728.8,664.4 730.2,661.4 728.5,658.0 727.0,659.5ZM688.0,673.2 689.8,670.4 690.7,671.8 689.3,673.5ZM502.9,707.9 505.5,705.8 507.7,704.5 509.6,702.1 513.0,702.6 515.3,704.8 515.8,707.4 516.2,708.4 514.4,707.9 511.7,708.4 509.4,706.1 508.2,707.4 505.5,708.1ZM510.3,719.5 511.7,720.5 513.0,718.8 513.0,714.7 514.4,712.2 515.3,710.2 514.2,709.7 512.6,710.2 510.8,712.2 510.0,713.5 510.8,714.0 510.5,717.1ZM515.8,709.9 517.9,709.4 521.5,709.7 524.1,712.2 524.1,713.5 521.8,713.2 521.8,711.7 521.1,715.9 519.9,717.1 519.5,715.2 517.9,715.4 517.2,715.4 518.3,713.5 518.1,711.7 516.7,710.7ZM518.1,720.3 519.7,721.0 521.5,720.5 524.1,719.1 526.1,717.6 525.0,717.4 523.3,718.1 521.5,718.1 519.7,719.5 518.6,719.3ZM524.5,716.4 525.4,715.6 528.6,714.7 530.7,714.2 530.9,715.7 529.5,716.4 526.8,716.2 525.6,716.7ZM444.4,647.9 447.9,643.6 445.3,640.9 451.5,640.0 456.8,640.9 457.7,643.2 454.1,645.8 456.8,648.7 451.5,649.2 448.8,647.5ZM458.9,664.0 461.2,659.9 463.2,658.8 465.7,659.9 468.3,657.6 471.9,657.6 471.0,659.5 467.4,661.8 464.8,663.7 462.1,664.9ZM468.9,672.5 471.9,670.8 477.2,670.1 477.2,671.1 472.8,671.8ZM483.7,680.1 485.2,675.5 486.0,675.5 485.5,679.8ZM492.6,688.2 494.0,692.0 495.1,697.1 494.4,698.0 494.0,696.3 491.4,692.0 490.5,689.7ZM487.8,690.0 489.1,692.9 489.9,695.7 491.4,697.7 491.7,696.3 489.9,693.5 488.7,690.5ZM539.2,643.6 541.9,641.4 542.2,643.2 540.1,644.9ZM722.1,802.6 722.6,801.3 726.1,801.2 726.7,802.6 726.1,803.8 725.3,806.0 724.2,806.1 722.6,806.3 722.1,804.4ZM717.8,807.7 718.5,810.6 720.5,815.0 721.2,817.2 719.9,816.5 718.2,812.4 717.5,808.8ZM726.1,818.6 727.6,822.2 728.3,827.1 727.2,826.8 726.5,823.1 726.0,819.5ZM729.5,793.7 730.0,795.5 730.8,797.3 730.2,797.3 729.3,795.5ZM690.4,777.6 691.6,777.7 691.6,778.8 690.5,778.6ZM541.9,829.1 543.1,829.9 544.0,831.4 542.7,830.8ZM538.7,782.4 539.7,782.4 540.1,784.8 538.7,785.1 538.1,783.9ZM800.9,718.6 803.2,717.9 804.6,718.3 802.9,719.3ZM899.8,711.7 901.2,711.7 900.9,713.2 900.0,713.2ZM849.7,778.1 850.7,778.8 851.3,779.6 850.4,779.2ZM513.7,780.3 514.9,780.5 515.6,781.7 514.2,781.4Z" fill="#bdd0e6"/></g>
<text x="468.2" y="693.6" font-size="23.2" fill="#4b4b57" textLength="77.3" lengthAdjust="spacingAndGlyphs">NORTH</text>
<text x="459.5" y="717.2" font-size="23.2" fill="#4b4b57" textLength="99.2" lengthAdjust="spacingAndGlyphs">AMERICA</text>
<text x="687.4" y="707.6" font-size="23.2" fill="#4b4b57" textLength="87.1" lengthAdjust="spacingAndGlyphs">EUROPE</text>
<text x="839.1" y="695.5" font-size="23.2" fill="#4b4b57" textLength="53.9" lengthAdjust="spacingAndGlyphs">ASIA</text>
<text x="690.4" y="802.8" font-size="23.2" fill="#4b4b57" textLength="80.3" lengthAdjust="spacingAndGlyphs">AFRICA</text>
<text x="556.7" y="837.5" font-size="23.2" fill="#4b4b57" textLength="75.4" lengthAdjust="spacingAndGlyphs">SOUTH</text>
<text x="545.4" y="860.8" font-size="23.2" fill="#4b4b57" textLength="99.9" lengthAdjust="spacingAndGlyphs">AMERICA</text>
<text x="884.3" y="854.4" font-size="23.2" fill="#4b4b57" textLength="119.7" lengthAdjust="spacingAndGlyphs">AUSTRALIA</text>
<text x="578.5" y="749.4" font-size="15.4" fill="#6c80c6" textLength="52.5" lengthAdjust="spacingAndGlyphs">Atlantic</text>
<text x="585" y="765.2" font-size="15.4" fill="#6c80c6" textLength="44.5" lengthAdjust="spacingAndGlyphs">Ocean</text>
<text x="793.9" y="845.8" font-size="15.4" fill="#6c80c6" textLength="42.3" lengthAdjust="spacingAndGlyphs">Indian</text>
<text x="793.9" y="861.2" font-size="15.4" fill="#6c80c6" textLength="44.6" lengthAdjust="spacingAndGlyphs">Ocean</text>
<circle cx="458.5" cy="739.3" r="3.5" fill="#f58d3a" fill-opacity="0.8" stroke="#c2571a" stroke-width="1.4"/><circle cx="505.3" cy="752.2" r="3.5" fill="#f58d3a" fill-opacity="0.8" stroke="#c2571a" stroke-width="1.4"/><circle cx="543.4" cy="709.6" r="3.5" fill="#f58d3a" fill-opacity="0.8" stroke="#c2571a" stroke-width="1.4"/><circle cx="533.5" cy="757.9" r="3.5" fill="#f58d3a" fill-opacity="0.8" stroke="#c2571a" stroke-width="1.4"/><g fill="#3cc4e6" fill-opacity="0.3" stroke="#0a88a5" stroke-width="1.5"><circle cx="501.5" cy="744.8" r="3.5"/><circle cx="481.8" cy="724.9" r="3.5"/><circle cx="462.1" cy="728.3" r="3.5"/><circle cx="510.0" cy="721.2" r="3.5"/><circle cx="489.4" cy="738.7" r="3.5"/><circle cx="482.5" cy="745.1" r="3.5"/><circle cx="514.3" cy="711.8" r="3.5"/><circle cx="463.4" cy="733.2" r="3.5"/><circle cx="479.9" cy="710.0" r="3.5"/><circle cx="454.4" cy="735.4" r="3.5"/><circle cx="508.0" cy="735.6" r="3.5"/><circle cx="492.3" cy="752.2" r="3.5"/><circle cx="479.6" cy="716.5" r="3.5"/><circle cx="490.9" cy="722.6" r="3.5"/><circle cx="497.1" cy="727.9" r="3.5"/><circle cx="478.1" cy="727.1" r="3.5"/><circle cx="521.3" cy="750.3" r="3.5"/><circle cx="534.4" cy="718.7" r="3.5"/><circle cx="447.9" cy="704.1" r="3.5"/><circle cx="476.6" cy="718.0" r="3.5"/><circle cx="474.9" cy="726.6" r="3.5"/><circle cx="488.2" cy="726.4" r="3.5"/><circle cx="480.4" cy="739.8" r="3.5"/><circle cx="505.2" cy="716.0" r="3.5"/><circle cx="532.8" cy="723.8" r="3.5"/><circle cx="448.7" cy="711.6" r="3.5"/><circle cx="479.6" cy="725.5" r="3.5"/><circle cx="519.8" cy="723.8" r="3.5"/><circle cx="471.5" cy="724.4" r="3.5"/><circle cx="475.3" cy="732.6" r="3.5"/><circle cx="465.5" cy="711.6" r="3.5"/><circle cx="472.0" cy="706.3" r="3.5"/><circle cx="510.9" cy="725.7" r="3.5"/><circle cx="510.3" cy="706.7" r="3.5"/><circle cx="451.1" cy="720.0" r="3.5"/><circle cx="495.8" cy="703.6" r="3.5"/><circle cx="514.8" cy="739.2" r="3.5"/><circle cx="487.5" cy="730.4" r="3.5"/><circle cx="531.8" cy="716.9" r="3.5"/><circle cx="484.5" cy="715.3" r="3.5"/><circle cx="496.7" cy="719.0" r="3.5"/><circle cx="525.9" cy="726.6" r="3.5"/><circle cx="478.8" cy="718.9" r="3.5"/><circle cx="455.3" cy="721.4" r="3.5"/><circle cx="455.7" cy="719.3" r="3.5"/><circle cx="497.3" cy="739.2" r="3.5"/><circle cx="519.2" cy="731.5" r="3.5"/><circle cx="509.4" cy="734.3" r="3.5"/><circle cx="485.3" cy="731.5" r="3.5"/><circle cx="521.1" cy="726.9" r="3.5"/><circle cx="484.4" cy="737.9" r="3.5"/><circle cx="466.6" cy="739.8" r="3.5"/><circle cx="495.0" cy="714.5" r="3.5"/><circle cx="485.8" cy="725.9" r="3.5"/><circle cx="540.2" cy="714.4" r="3.5"/><circle cx="455.8" cy="732.0" r="3.5"/><circle cx="538.3" cy="718.9" r="3.5"/><circle cx="456.6" cy="711.5" r="3.5"/><circle cx="489.9" cy="741.5" r="3.5"/><circle cx="527.4" cy="720.2" r="3.5"/><circle cx="457.5" cy="721.9" r="3.5"/><circle cx="479.9" cy="706.7" r="3.5"/><circle cx="481.6" cy="711.9" r="3.5"/><circle cx="468.0" cy="707.5" r="3.5"/><circle cx="473.5" cy="708.4" r="3.5"/><circle cx="480.9" cy="716.1" r="3.5"/><circle cx="468.7" cy="703.9" r="3.5"/><circle cx="492.9" cy="732.1" r="3.5"/><circle cx="460.9" cy="717.4" r="3.5"/><circle cx="468.1" cy="732.7" r="3.5"/><circle cx="457.9" cy="710.0" r="3.5"/><circle cx="492.3" cy="750.8" r="3.5"/><circle cx="451.1" cy="723.0" r="3.5"/><circle cx="490.6" cy="725.4" r="3.5"/><circle cx="450.5" cy="708.8" r="3.5"/><circle cx="530.8" cy="717.8" r="3.5"/><circle cx="489.9" cy="712.1" r="3.5"/><circle cx="517.2" cy="738.0" r="3.5"/><circle cx="456.1" cy="710.5" r="3.5"/><circle cx="481.8" cy="712.9" r="3.5"/><circle cx="475.8" cy="724.6" r="3.5"/><circle cx="509.3" cy="723.1" r="3.5"/><circle cx="464.4" cy="704.1" r="3.5"/><circle cx="499.2" cy="705.5" r="3.5"/><circle cx="502.9" cy="735.7" r="3.5"/><circle cx="472.6" cy="708.8" r="3.5"/><circle cx="503.7" cy="724.0" r="3.5"/><circle cx="475.5" cy="733.4" r="3.5"/><circle cx="501.6" cy="725.6" r="3.5"/><circle cx="449.8" cy="715.0" r="3.5"/><circle cx="493.2" cy="720.3" r="3.5"/><circle cx="470.7" cy="720.5" r="3.5"/><circle cx="470.4" cy="724.6" r="3.5"/><circle cx="509.6" cy="721.5" r="3.5"/><circle cx="471.6" cy="731.3" r="3.5"/><circle cx="469.4" cy="704.0" r="3.5"/><circle cx="510.5" cy="716.1" r="3.5"/><circle cx="502.7" cy="728.6" r="3.5"/><circle cx="497.4" cy="730.4" r="3.5"/><circle cx="512.4" cy="709.5" r="3.5"/><circle cx="448.1" cy="724.1" r="3.5"/><circle cx="472.4" cy="727.0" r="3.5"/><circle cx="495.2" cy="744.8" r="3.5"/><circle cx="451.1" cy="717.0" r="3.5"/><circle cx="515.3" cy="724.7" r="3.5"/><circle cx="499.5" cy="722.6" r="3.5"/><circle cx="509.0" cy="738.5" r="3.5"/><circle cx="524.0" cy="752.5" r="3.5"/><circle cx="480.8" cy="704.1" r="3.5"/><circle cx="491.7" cy="750.0" r="3.5"/><circle cx="506.7" cy="707.2" r="3.5"/><circle cx="500.9" cy="705.2" r="3.5"/><circle cx="476.9" cy="732.4" r="3.5"/><circle cx="497.6" cy="725.8" r="3.5"/><circle cx="465.0" cy="736.2" r="3.5"/><circle cx="502.4" cy="715.7" r="3.5"/><circle cx="448.4" cy="709.9" r="3.5"/><circle cx="515.7" cy="736.0" r="3.5"/><circle cx="489.9" cy="735.2" r="3.5"/><circle cx="493.7" cy="733.6" r="3.5"/><circle cx="484.6" cy="713.9" r="3.5"/><circle cx="499.4" cy="743.8" r="3.5"/><circle cx="448.4" cy="708.7" r="3.5"/><circle cx="509.2" cy="709.5" r="3.5"/><circle cx="497.5" cy="724.5" r="3.5"/><circle cx="521.6" cy="724.1" r="3.5"/><circle cx="484.2" cy="719.2" r="3.5"/><circle cx="517.7" cy="716.2" r="3.5"/><circle cx="483.0" cy="733.1" r="3.5"/><circle cx="478.0" cy="709.9" r="3.5"/><circle cx="488.9" cy="728.4" r="3.5"/><circle cx="491.3" cy="725.8" r="3.5"/><circle cx="471.3" cy="712.7" r="3.5"/><circle cx="477.5" cy="725.0" r="3.5"/><circle cx="516.4" cy="712.3" r="3.5"/><circle cx="490.9" cy="709.3" r="3.5"/><circle cx="509.2" cy="726.2" r="3.5"/><circle cx="493.9" cy="738.7" r="3.5"/><circle cx="530.2" cy="720.9" r="3.5"/><circle cx="450.6" cy="709.6" r="3.5"/><circle cx="496.2" cy="730.5" r="3.5"/><circle cx="470.9" cy="704.1" r="3.5"/><circle cx="491.3" cy="718.0" r="3.5"/><circle cx="502.9" cy="717.6" r="3.5"/><circle cx="449.6" cy="709.7" r="3.5"/><circle cx="456.1" cy="714.0" r="3.5"/><circle cx="465.1" cy="708.6" r="3.5"/><circle cx="448.5" cy="713.5" r="3.5"/><circle cx="499.3" cy="742.5" r="3.5"/><circle cx="451.0" cy="721.1" r="3.5"/><circle cx="452.3" cy="714.8" r="3.5"/><circle cx="473.7" cy="706.7" r="3.5"/><circle cx="472.9" cy="728.8" r="3.5"/><circle cx="447.9" cy="704.1" r="3.5"/><circle cx="505.0" cy="745.9" r="3.5"/><circle cx="476.8" cy="718.3" r="3.5"/><circle cx="514.1" cy="734.7" r="3.5"/><circle cx="498.8" cy="714.7" r="3.5"/><circle cx="471.1" cy="720.8" r="3.5"/><circle cx="506.4" cy="718.5" r="3.5"/><circle cx="502.9" cy="721.9" r="3.5"/><circle cx="517.5" cy="725.9" r="3.5"/><circle cx="493.4" cy="737.6" r="3.5"/><circle cx="527.9" cy="733.2" r="3.5"/><circle cx="456.4" cy="703.7" r="3.5"/><circle cx="469.5" cy="719.9" r="3.5"/><circle cx="516.0" cy="733.9" r="3.5"/><circle cx="496.4" cy="716.5" r="3.5"/><circle cx="521.2" cy="757.2" r="3.5"/><circle cx="480.8" cy="715.0" r="3.5"/><circle cx="517.4" cy="711.5" r="3.5"/><circle cx="497.6" cy="735.1" r="3.5"/><circle cx="492.7" cy="709.6" r="3.5"/><circle cx="501.6" cy="725.3" r="3.5"/><circle cx="521.7" cy="737.3" r="3.5"/><circle cx="543.1" cy="706.5" r="3.5"/><circle cx="463.9" cy="731.7" r="3.5"/><circle cx="528.8" cy="729.2" r="3.5"/><circle cx="521.7" cy="750.2" r="3.5"/><circle cx="513.5" cy="716.5" r="3.5"/><circle cx="519.9" cy="725.3" r="3.5"/><circle cx="514.3" cy="716.6" r="3.5"/><circle cx="501.8" cy="728.3" r="3.5"/><circle cx="489.6" cy="743.5" r="3.5"/><circle cx="454.9" cy="717.4" r="3.5"/><circle cx="492.1" cy="731.4" r="3.5"/><circle cx="495.5" cy="746.8" r="3.5"/><circle cx="459.4" cy="704.6" r="3.5"/><circle cx="497.1" cy="704.0" r="3.5"/><circle cx="510.0" cy="739.5" r="3.5"/><circle cx="471.0" cy="734.1" r="3.5"/><circle cx="502.3" cy="705.8" r="3.5"/><circle cx="543.1" cy="709.9" r="3.5"/><circle cx="484.1" cy="704.1" r="3.5"/><circle cx="487.0" cy="744.3" r="3.5"/><circle cx="485.7" cy="728.1" r="3.5"/><circle cx="491.7" cy="731.5" r="3.5"/><circle cx="494.7" cy="705.0" r="3.5"/><circle cx="490.6" cy="704.1" r="3.5"/><circle cx="484.8" cy="719.4" r="3.5"/><circle cx="470.2" cy="705.3" r="3.5"/><circle cx="468.9" cy="724.3" r="3.5"/><circle cx="526.2" cy="731.4" r="3.5"/><circle cx="498.1" cy="725.2" r="3.5"/><circle cx="450.0" cy="718.0" r="3.5"/><circle cx="499.9" cy="713.5" r="3.5"/><circle cx="484.6" cy="720.9" r="3.5"/><circle cx="455.2" cy="711.0" r="3.5"/><circle cx="483.5" cy="720.0" r="3.5"/><circle cx="448.0" cy="707.0" r="3.5"/><circle cx="521.9" cy="736.7" r="3.5"/><circle cx="529.0" cy="725.1" r="3.5"/><circle cx="482.5" cy="710.6" r="3.5"/><circle cx="505.1" cy="706.1" r="3.5"/><circle cx="516.7" cy="743.7" r="3.5"/><circle cx="459.2" cy="725.9" r="3.5"/><circle cx="509.4" cy="739.2" r="3.5"/><circle cx="448.1" cy="719.7" r="3.5"/><circle cx="495.4" cy="722.4" r="3.5"/><circle cx="469.5" cy="733.4" r="3.5"/><circle cx="449.0" cy="708.2" r="3.5"/><circle cx="497.8" cy="704.9" r="3.5"/><circle cx="482.4" cy="727.4" r="3.5"/><circle cx="507.5" cy="740.0" r="3.5"/><circle cx="448.6" cy="724.5" r="3.5"/><circle cx="464.5" cy="718.1" r="3.5"/><circle cx="480.4" cy="706.4" r="3.5"/><circle cx="470.2" cy="715.0" r="3.5"/><circle cx="480.8" cy="731.4" r="3.5"/><circle cx="484.7" cy="724.5" r="3.5"/><circle cx="468.8" cy="728.0" r="3.5"/><circle cx="512.8" cy="720.2" r="3.5"/><circle cx="450.9" cy="729.2" r="3.5"/><circle cx="501.0" cy="742.8" r="3.5"/><circle cx="459.7" cy="708.2" r="3.5"/><circle cx="510.1" cy="736.1" r="3.5"/><circle cx="462.6" cy="727.3" r="3.5"/><circle cx="529.6" cy="723.6" r="3.5"/><circle cx="486.7" cy="705.8" r="3.5"/><circle cx="476.2" cy="736.7" r="3.5"/><circle cx="467.2" cy="721.7" r="3.5"/><circle cx="495.8" cy="713.7" r="3.5"/><circle cx="466.4" cy="738.7" r="3.5"/><circle cx="464.9" cy="719.0" r="3.5"/><circle cx="482.0" cy="710.9" r="3.5"/><circle cx="507.1" cy="713.3" r="3.5"/><circle cx="463.9" cy="725.3" r="3.5"/><circle cx="507.1" cy="743.9" r="3.5"/><circle cx="521.5" cy="752.0" r="3.5"/><circle cx="485.7" cy="744.5" r="3.5"/><circle cx="525.4" cy="724.8" r="3.5"/><circle cx="456.6" cy="717.4" r="3.5"/><circle cx="506.0" cy="720.4" r="3.5"/><circle cx="458.2" cy="715.2" r="3.5"/><circle cx="514.3" cy="725.9" r="3.5"/><circle cx="467.2" cy="723.4" r="3.5"/><circle cx="482.2" cy="708.4" r="3.5"/><circle cx="475.0" cy="723.7" r="3.5"/><circle cx="465.1" cy="739.6" r="3.5"/><circle cx="464.9" cy="706.4" r="3.5"/><circle cx="482.6" cy="731.5" r="3.5"/><circle cx="487.1" cy="737.3" r="3.5"/><circle cx="517.2" cy="715.9" r="3.5"/><circle cx="481.0" cy="740.8" r="3.5"/><circle cx="454.1" cy="723.4" r="3.5"/><circle cx="504.4" cy="706.6" r="3.5"/><circle cx="492.8" cy="732.9" r="3.5"/><circle cx="512.0" cy="715.3" r="3.5"/><circle cx="455.8" cy="735.9" r="3.5"/><circle cx="514.1" cy="717.9" r="3.5"/><circle cx="495.5" cy="728.7" r="3.5"/><circle cx="473.8" cy="740.4" r="3.5"/><circle cx="497.4" cy="731.1" r="3.5"/><circle cx="451.0" cy="712.9" r="3.5"/><circle cx="504.1" cy="719.4" r="3.5"/><circle cx="459.4" cy="734.4" r="3.5"/><circle cx="503.0" cy="718.6" r="3.5"/><circle cx="481.0" cy="738.2" r="3.5"/><circle cx="486.1" cy="729.7" r="3.5"/><circle cx="474.2" cy="741.0" r="3.5"/><circle cx="460.0" cy="715.5" r="3.5"/><circle cx="531.5" cy="720.8" r="3.5"/><circle cx="497.3" cy="707.8" r="3.5"/><circle cx="503.3" cy="739.6" r="3.5"/><circle cx="513.2" cy="712.4" r="3.5"/><circle cx="458.4" cy="716.7" r="3.5"/><circle cx="521.9" cy="736.6" r="3.5"/><circle cx="528.4" cy="718.2" r="3.5"/><circle cx="455.8" cy="721.1" r="3.5"/><circle cx="463.8" cy="728.5" r="3.5"/><circle cx="516.1" cy="734.0" r="3.5"/><circle cx="467.6" cy="704.1" r="3.5"/><circle cx="525.5" cy="730.0" r="3.5"/><circle cx="539.7" cy="714.5" r="3.5"/><circle cx="462.2" cy="705.4" r="3.5"/><circle cx="469.8" cy="709.9" r="3.5"/><circle cx="505.0" cy="745.1" r="3.5"/><circle cx="463.6" cy="707.3" r="3.5"/><circle cx="504.8" cy="730.3" r="3.5"/><circle cx="455.6" cy="716.1" r="3.5"/><circle cx="471.7" cy="740.4" r="3.5"/><circle cx="519.1" cy="731.8" r="3.5"/><circle cx="473.8" cy="723.6" r="3.5"/><circle cx="493.6" cy="710.3" r="3.5"/><circle cx="503.1" cy="718.1" r="3.5"/><circle cx="471.6" cy="714.5" r="3.5"/><circle cx="488.1" cy="733.4" r="3.5"/><circle cx="503.4" cy="724.3" r="3.5"/><circle cx="495.9" cy="738.2" r="3.5"/><circle cx="477.2" cy="739.9" r="3.5"/><circle cx="498.3" cy="738.6" r="3.5"/><circle cx="514.4" cy="723.0" r="3.5"/><circle cx="537.1" cy="717.4" r="3.5"/><circle cx="485.0" cy="713.2" r="3.5"/><circle cx="512.3" cy="721.4" r="3.5"/><circle cx="489.8" cy="738.3" r="3.5"/><circle cx="505.2" cy="712.8" r="3.5"/><circle cx="453.1" cy="711.5" r="3.5"/><circle cx="482.1" cy="712.4" r="3.5"/><circle cx="462.4" cy="719.0" r="3.5"/><circle cx="471.2" cy="732.2" r="3.5"/><circle cx="512.0" cy="721.7" r="3.5"/><circle cx="520.6" cy="745.7" r="3.5"/><circle cx="478.0" cy="726.6" r="3.5"/><circle cx="510.9" cy="718.2" r="3.5"/><circle cx="523.3" cy="735.1" r="3.5"/><circle cx="498.7" cy="743.4" r="3.5"/><circle cx="475.9" cy="722.3" r="3.5"/><circle cx="513.1" cy="726.5" r="3.5"/><circle cx="495.3" cy="705.0" r="3.5"/><circle cx="538.8" cy="719.7" r="3.5"/><circle cx="495.2" cy="728.7" r="3.5"/><circle cx="523.2" cy="754.8" r="3.5"/><circle cx="485.1" cy="742.9" r="3.5"/><circle cx="459.8" cy="732.8" r="3.5"/><circle cx="456.2" cy="736.1" r="3.5"/><circle cx="530.9" cy="717.7" r="3.5"/><circle cx="514.5" cy="724.9" r="3.5"/><circle cx="490.2" cy="711.3" r="3.5"/><circle cx="455.1" cy="707.1" r="3.5"/><circle cx="512.9" cy="708.3" r="3.5"/><circle cx="476.0" cy="714.4" r="3.5"/><circle cx="455.3" cy="732.8" r="3.5"/><circle cx="496.1" cy="711.4" r="3.5"/><circle cx="498.9" cy="709.7" r="3.5"/><circle cx="476.9" cy="712.8" r="3.5"/><circle cx="527.8" cy="732.8" r="3.5"/><circle cx="530.8" cy="719.8" r="3.5"/><circle cx="485.9" cy="732.1" r="3.5"/><circle cx="517.7" cy="712.4" r="3.5"/><circle cx="464.2" cy="711.6" r="3.5"/><circle cx="482.0" cy="732.2" r="3.5"/><circle cx="488.0" cy="714.1" r="3.5"/><circle cx="483.0" cy="723.0" r="3.5"/><circle cx="514.1" cy="730.1" r="3.5"/><circle cx="473.8" cy="714.9" r="3.5"/><circle cx="451.9" cy="727.9" r="3.5"/><circle cx="511.1" cy="718.0" r="3.5"/><circle cx="514.0" cy="717.5" r="3.5"/><circle cx="491.1" cy="749.3" r="3.5"/><circle cx="460.5" cy="728.2" r="3.5"/><circle cx="468.8" cy="726.7" r="3.5"/><circle cx="511.1" cy="743.0" r="3.5"/><circle cx="502.9" cy="715.9" r="3.5"/><circle cx="469.2" cy="703.7" r="3.5"/><circle cx="499.2" cy="715.4" r="3.5"/><circle cx="459.3" cy="720.4" r="3.5"/><circle cx="455.3" cy="709.5" r="3.5"/><circle cx="534.1" cy="716.2" r="3.5"/><circle cx="480.0" cy="716.1" r="3.5"/><circle cx="517.3" cy="724.8" r="3.5"/><circle cx="488.7" cy="736.2" r="3.5"/><circle cx="468.9" cy="709.3" r="3.5"/><circle cx="502.4" cy="720.7" r="3.5"/><circle cx="502.4" cy="742.8" r="3.5"/><circle cx="503.9" cy="723.2" r="3.5"/><circle cx="493.5" cy="746.0" r="3.5"/><circle cx="490.3" cy="746.9" r="3.5"/><circle cx="509.7" cy="736.0" r="3.5"/><circle cx="492.8" cy="717.7" r="3.5"/><circle cx="493.7" cy="717.2" r="3.5"/><circle cx="461.5" cy="712.5" r="3.5"/><circle cx="488.7" cy="729.4" r="3.5"/><circle cx="457.6" cy="708.9" r="3.5"/><circle cx="453.7" cy="707.3" r="3.5"/><circle cx="511.7" cy="715.4" r="3.5"/><circle cx="491.3" cy="720.1" r="3.5"/><circle cx="505.4" cy="742.7" r="3.5"/><circle cx="471.1" cy="710.6" r="3.5"/><circle cx="481.5" cy="724.3" r="3.5"/><circle cx="451.3" cy="705.4" r="3.5"/><circle cx="509.3" cy="715.3" r="3.5"/><circle cx="497.3" cy="736.3" r="3.5"/><circle cx="456.1" cy="710.1" r="3.5"/><circle cx="500.2" cy="740.5" r="3.5"/><circle cx="482.9" cy="733.9" r="3.5"/><circle cx="536.6" cy="716.6" r="3.5"/><circle cx="454.5" cy="704.1" r="3.5"/><circle cx="457.0" cy="735.9" r="3.5"/><circle cx="459.4" cy="732.2" r="3.5"/><circle cx="480.2" cy="709.5" r="3.5"/><circle cx="470.8" cy="706.9" r="3.5"/><circle cx="482.6" cy="715.1" r="3.5"/><circle cx="501.0" cy="708.6" r="3.5"/><circle cx="490.5" cy="729.6" r="3.5"/><circle cx="497.2" cy="712.0" r="3.5"/><circle cx="473.9" cy="737.5" r="3.5"/><circle cx="481.8" cy="743.0" r="3.5"/><circle cx="473.1" cy="704.4" r="3.5"/><circle cx="489.9" cy="711.7" r="3.5"/><circle cx="520.0" cy="745.6" r="3.5"/><circle cx="521.6" cy="727.6" r="3.5"/><circle cx="529.0" cy="731.4" r="3.5"/><circle cx="464.3" cy="712.2" r="3.5"/><circle cx="519.8" cy="726.1" r="3.5"/><circle cx="460.2" cy="704.2" r="3.5"/><circle cx="514.7" cy="712.5" r="3.5"/><circle cx="531.9" cy="716.2" r="3.5"/><circle cx="469.2" cy="721.9" r="3.5"/><circle cx="507.0" cy="722.3" r="3.5"/><circle cx="464.3" cy="727.4" r="3.5"/><circle cx="507.0" cy="738.3" r="3.5"/><circle cx="523.2" cy="753.1" r="3.5"/><circle cx="531.3" cy="723.0" r="3.5"/><circle cx="492.6" cy="727.9" r="3.5"/><circle cx="494.2" cy="721.6" r="3.5"/><circle cx="508.5" cy="723.9" r="3.5"/><circle cx="484.8" cy="706.5" r="3.5"/><circle cx="496.1" cy="745.8" r="3.5"/><circle cx="490.9" cy="716.3" r="3.5"/><circle cx="524.0" cy="733.0" r="3.5"/><circle cx="455.3" cy="722.5" r="3.5"/><circle cx="485.1" cy="729.1" r="3.5"/><circle cx="465.5" cy="729.0" r="3.5"/><circle cx="492.8" cy="732.1" r="3.5"/><circle cx="514.1" cy="709.3" r="3.5"/><circle cx="467.6" cy="703.9" r="3.5"/><circle cx="483.3" cy="724.4" r="3.5"/><circle cx="528.9" cy="729.7" r="3.5"/><circle cx="491.2" cy="726.5" r="3.5"/><circle cx="520.5" cy="729.3" r="3.5"/><circle cx="506.1" cy="723.2" r="3.5"/><circle cx="465.6" cy="705.4" r="3.5"/><circle cx="452.0" cy="731.1" r="3.5"/><circle cx="483.4" cy="738.7" r="3.5"/><circle cx="497.2" cy="704.7" r="3.5"/><circle cx="466.3" cy="710.6" r="3.5"/><circle cx="486.3" cy="720.6" r="3.5"/><circle cx="512.6" cy="741.8" r="3.5"/><circle cx="499.7" cy="721.5" r="3.5"/><circle cx="487.9" cy="739.5" r="3.5"/><circle cx="523.1" cy="732.7" r="3.5"/><circle cx="486.2" cy="705.3" r="3.5"/><circle cx="502.3" cy="743.4" r="3.5"/><circle cx="529.1" cy="727.6" r="3.5"/><circle cx="466.6" cy="735.4" r="3.5"/><circle cx="451.3" cy="722.7" r="3.5"/><circle cx="470.0" cy="741.1" r="3.5"/><circle cx="473.4" cy="724.2" r="3.5"/><circle cx="454.8" cy="728.7" r="3.5"/><circle cx="492.5" cy="713.0" r="3.5"/><circle cx="496.8" cy="714.3" r="3.5"/><circle cx="496.6" cy="712.9" r="3.5"/><circle cx="456.5" cy="729.5" r="3.5"/><circle cx="533.1" cy="714.7" r="3.5"/><circle cx="476.9" cy="735.7" r="3.5"/><circle cx="510.8" cy="713.3" r="3.5"/><circle cx="484.6" cy="703.6" r="3.5"/><circle cx="473.7" cy="715.0" r="3.5"/><circle cx="478.6" cy="713.8" r="3.5"/><circle cx="474.2" cy="704.1" r="3.5"/><circle cx="516.2" cy="741.5" r="3.5"/><circle cx="518.4" cy="735.5" r="3.5"/><circle cx="465.1" cy="739.2" r="3.5"/><circle cx="474.4" cy="714.9" r="3.5"/><circle cx="454.3" cy="725.6" r="3.5"/><circle cx="464.7" cy="721.5" r="3.5"/><circle cx="470.9" cy="703.9" r="3.5"/><circle cx="492.1" cy="710.6" r="3.5"/><circle cx="543.0" cy="708.4" r="3.5"/><circle cx="461.4" cy="725.1" r="3.5"/><circle cx="470.2" cy="719.4" r="3.5"/><circle cx="519.8" cy="745.8" r="3.5"/><circle cx="504.3" cy="706.1" r="3.5"/><circle cx="451.4" cy="707.3" r="3.5"/><circle cx="499.5" cy="709.8" r="3.5"/><circle cx="467.8" cy="724.3" r="3.5"/><circle cx="494.1" cy="710.9" r="3.5"/><circle cx="469.3" cy="714.8" r="3.5"/><circle cx="508.7" cy="727.4" r="3.5"/><circle cx="456.1" cy="732.1" r="3.5"/><circle cx="476.6" cy="721.0" r="3.5"/><circle cx="507.6" cy="727.1" r="3.5"/><circle cx="472.1" cy="736.4" r="3.5"/><circle cx="473.9" cy="713.4" r="3.5"/><circle cx="454.0" cy="735.4" r="3.5"/><circle cx="460.7" cy="710.2" r="3.5"/><circle cx="485.1" cy="723.3" r="3.5"/><circle cx="493.5" cy="728.9" r="3.5"/><circle cx="517.9" cy="731.6" r="3.5"/><circle cx="449.1" cy="717.6" r="3.5"/><circle cx="472.3" cy="708.8" r="3.5"/><circle cx="468.9" cy="715.1" r="3.5"/><circle cx="486.4" cy="709.2" r="3.5"/><circle cx="503.6" cy="742.2" r="3.5"/><circle cx="494.5" cy="744.6" r="3.5"/><circle cx="534.9" cy="719.5" r="3.5"/><circle cx="536.9" cy="716.7" r="3.5"/><circle cx="446.0" cy="705.5" r="3.5"/><circle cx="508.4" cy="738.2" r="3.5"/><circle cx="523.2" cy="733.4" r="3.5"/><circle cx="475.8" cy="727.7" r="3.5"/><circle cx="482.8" cy="729.0" r="3.5"/><circle cx="473.0" cy="723.4" r="3.5"/><circle cx="509.0" cy="718.3" r="3.5"/><circle cx="501.2" cy="740.3" r="3.5"/><circle cx="519.6" cy="746.6" r="3.5"/><circle cx="542.6" cy="711.9" r="3.5"/><circle cx="448.8" cy="725.2" r="3.5"/><circle cx="482.7" cy="732.3" r="3.5"/><circle cx="459.2" cy="730.1" r="3.5"/><circle cx="451.3" cy="716.8" r="3.5"/><circle cx="503.2" cy="718.4" r="3.5"/><circle cx="475.8" cy="726.7" r="3.5"/><circle cx="477.8" cy="737.5" r="3.5"/><circle cx="487.2" cy="730.1" r="3.5"/><circle cx="452.7" cy="719.6" r="3.5"/><circle cx="529.3" cy="719.1" r="3.5"/><circle cx="472.1" cy="736.7" r="3.5"/><circle cx="509.5" cy="717.3" r="3.5"/><circle cx="477.6" cy="724.7" r="3.5"/><circle cx="457.2" cy="733.9" r="3.5"/><circle cx="455.9" cy="712.9" r="3.5"/><circle cx="455.9" cy="712.9" r="3.5"/><circle cx="456.1" cy="728.3" r="3.5"/><circle cx="515.8" cy="728.8" r="3.5"/><circle cx="516.2" cy="744.2" r="3.5"/><circle cx="453.0" cy="706.5" r="3.5"/><circle cx="535.4" cy="714.6" r="3.5"/><circle cx="506.1" cy="726.7" r="3.5"/><circle cx="507.0" cy="719.5" r="3.5"/><circle cx="500.5" cy="715.3" r="3.5"/><circle cx="532.5" cy="722.5" r="3.5"/><circle cx="455.1" cy="722.0" r="3.5"/><circle cx="477.5" cy="704.1" r="3.5"/><circle cx="463.8" cy="718.2" r="3.5"/><circle cx="520.0" cy="740.2" r="3.5"/><circle cx="462.3" cy="725.5" r="3.5"/><circle cx="477.7" cy="740.2" r="3.5"/><circle cx="503.4" cy="716.6" r="3.5"/><circle cx="501.2" cy="723.7" r="3.5"/><circle cx="529.9" cy="727.1" r="3.5"/><circle cx="471.9" cy="742.2" r="3.5"/><circle cx="473.5" cy="720.8" r="3.5"/><circle cx="459.9" cy="723.0" r="3.5"/><circle cx="495.4" cy="728.8" r="3.5"/><circle cx="491.2" cy="708.9" r="3.5"/><circle cx="448.5" cy="705.2" r="3.5"/><circle cx="462.5" cy="738.4" r="3.5"/><circle cx="448.9" cy="718.6" r="3.5"/><circle cx="466.5" cy="733.2" r="3.5"/><circle cx="504.8" cy="737.6" r="3.5"/><circle cx="450.8" cy="728.1" r="3.5"/><circle cx="509.2" cy="740.1" r="3.5"/><circle cx="489.9" cy="735.5" r="3.5"/><circle cx="516.0" cy="723.0" r="3.5"/><circle cx="462.9" cy="714.3" r="3.5"/><circle cx="482.1" cy="736.6" r="3.5"/><circle cx="472.2" cy="724.0" r="3.5"/><circle cx="478.3" cy="729.8" r="3.5"/><circle cx="491.2" cy="720.1" r="3.5"/><circle cx="474.6" cy="738.9" r="3.5"/><circle cx="528.7" cy="725.1" r="3.5"/><circle cx="451.2" cy="704.1" r="3.5"/><circle cx="510.5" cy="726.3" r="3.5"/><circle cx="453.5" cy="704.6" r="3.5"/><circle cx="496.0" cy="725.8" r="3.5"/><circle cx="463.5" cy="703.8" r="3.5"/><circle cx="479.7" cy="704.6" r="3.5"/><circle cx="453.2" cy="726.0" r="3.5"/><circle cx="485.6" cy="744.4" r="3.5"/><circle cx="502.5" cy="720.6" r="3.5"/><circle cx="471.7" cy="732.5" r="3.5"/><circle cx="481.4" cy="743.6" r="3.5"/><circle cx="504.2" cy="726.4" r="3.5"/><circle cx="454.9" cy="724.4" r="3.5"/><circle cx="462.0" cy="710.5" r="3.5"/><circle cx="478.9" cy="734.5" r="3.5"/><circle cx="467.5" cy="714.0" r="3.5"/><circle cx="543.8" cy="711.4" r="3.5"/><circle cx="487.0" cy="712.7" r="3.5"/><circle cx="502.0" cy="735.7" r="3.5"/><circle cx="464.6" cy="706.7" r="3.5"/><circle cx="540.7" cy="714.0" r="3.5"/><circle cx="519.9" cy="743.7" r="3.5"/><circle cx="489.2" cy="729.0" r="3.5"/><circle cx="451.6" cy="720.7" r="3.5"/><circle cx="495.0" cy="731.7" r="3.5"/><circle cx="512.8" cy="720.8" r="3.5"/><circle cx="516.4" cy="728.7" r="3.5"/><circle cx="501.7" cy="716.1" r="3.5"/><circle cx="454.1" cy="704.9" r="3.5"/><circle cx="477.1" cy="733.4" r="3.5"/><circle cx="458.4" cy="714.1" r="3.5"/><circle cx="484.4" cy="744.2" r="3.5"/><circle cx="509.2" cy="711.6" r="3.5"/><circle cx="511.6" cy="712.8" r="3.5"/><circle cx="447.8" cy="716.9" r="3.5"/><circle cx="510.2" cy="711.5" r="3.5"/><circle cx="523.9" cy="729.2" r="3.5"/><circle cx="542.9" cy="710.0" r="3.5"/><circle cx="517.9" cy="716.0" r="3.5"/><circle cx="457.1" cy="712.0" r="3.5"/><circle cx="470.7" cy="717.6" r="3.5"/><circle cx="524.5" cy="722.8" r="3.5"/><circle cx="484.3" cy="737.3" r="3.5"/><circle cx="529.7" cy="729.9" r="3.5"/><circle cx="527.2" cy="735.1" r="3.5"/><circle cx="486.4" cy="714.6" r="3.5"/><circle cx="451.1" cy="716.3" r="3.5"/><circle cx="523.0" cy="752.3" r="3.5"/><circle cx="460.0" cy="732.7" r="3.5"/><circle cx="449.1" cy="704.0" r="3.5"/><circle cx="483.4" cy="715.5" r="3.5"/><circle cx="453.9" cy="731.3" r="3.5"/><circle cx="522.3" cy="756.6" r="3.5"/><circle cx="494.3" cy="704.7" r="3.5"/><circle cx="496.5" cy="714.1" r="3.5"/><circle cx="458.0" cy="715.4" r="3.5"/><circle cx="485.0" cy="711.0" r="3.5"/><circle cx="457.8" cy="704.1" r="3.5"/><circle cx="458.1" cy="725.0" r="3.5"/><circle cx="457.6" cy="713.8" r="3.5"/><circle cx="480.6" cy="709.1" r="3.5"/><circle cx="459.4" cy="712.8" r="3.5"/><circle cx="462.3" cy="721.3" r="3.5"/><circle cx="512.9" cy="722.2" r="3.5"/><circle cx="488.1" cy="731.7" r="3.5"/><circle cx="461.0" cy="718.0" r="3.5"/><circle cx="483.9" cy="742.3" r="3.5"/><circle cx="459.4" cy="730.1" r="3.5"/><circle cx="464.5" cy="717.1" r="3.5"/><circle cx="505.9" cy="735.2" r="3.5"/><circle cx="468.8" cy="727.4" r="3.5"/><circle cx="486.3" cy="741.8" r="3.5"/><circle cx="487.9" cy="733.2" r="3.5"/><circle cx="496.4" cy="730.7" r="3.5"/><circle cx="467.9" cy="733.3" r="3.5"/><circle cx="501.9" cy="723.1" r="3.5"/><circle cx="509.9" cy="720.7" r="3.5"/><circle cx="463.6" cy="737.1" r="3.5"/><circle cx="495.6" cy="711.9" r="3.5"/><circle cx="511.2" cy="707.6" r="3.5"/><circle cx="456.4" cy="705.6" r="3.5"/><circle cx="532.2" cy="715.9" r="3.5"/><circle cx="470.4" cy="716.1" r="3.5"/><circle cx="515.0" cy="722.8" r="3.5"/><circle cx="492.9" cy="747.1" r="3.5"/><circle cx="457.8" cy="726.7" r="3.5"/><circle cx="489.6" cy="740.9" r="3.5"/><circle cx="475.2" cy="725.7" r="3.5"/><circle cx="516.4" cy="715.2" r="3.5"/><circle cx="481.9" cy="728.8" r="3.5"/><circle cx="454.4" cy="716.4" r="3.5"/><circle cx="466.0" cy="716.0" r="3.5"/><circle cx="457.4" cy="710.3" r="3.5"/><circle cx="484.5" cy="745.4" r="3.5"/><circle cx="483.9" cy="709.6" r="3.5"/><circle cx="462.1" cy="708.1" r="3.5"/><circle cx="466.7" cy="718.0" r="3.5"/><circle cx="506.2" cy="731.5" r="3.5"/><circle cx="514.0" cy="715.5" r="3.5"/><circle cx="480.4" cy="710.0" r="3.5"/><circle cx="482.6" cy="719.1" r="3.5"/><circle cx="489.3" cy="712.0" r="3.5"/><circle cx="497.2" cy="729.0" r="3.5"/><circle cx="492.6" cy="708.2" r="3.5"/><circle cx="482.5" cy="732.8" r="3.5"/><circle cx="481.3" cy="704.9" r="3.5"/><circle cx="472.6" cy="715.2" r="3.5"/><circle cx="507.9" cy="725.1" r="3.5"/><circle cx="526.3" cy="718.7" r="3.5"/><circle cx="513.4" cy="723.0" r="3.5"/><circle cx="497.6" cy="720.1" r="3.5"/><circle cx="519.9" cy="731.5" r="3.5"/><circle cx="501.7" cy="744.1" r="3.5"/><circle cx="520.8" cy="726.2" r="3.5"/><circle cx="461.1" cy="705.4" r="3.5"/><circle cx="479.5" cy="724.5" r="3.5"/><circle cx="517.2" cy="736.1" r="3.5"/><circle cx="490.7" cy="707.9" r="3.5"/><circle cx="452.5" cy="716.1" r="3.5"/><circle cx="469.8" cy="714.5" r="3.5"/><circle cx="467.6" cy="704.9" r="3.5"/><circle cx="498.7" cy="744.5" r="3.5"/><circle cx="507.7" cy="709.8" r="3.5"/><circle cx="471.4" cy="739.1" r="3.5"/><circle cx="543.0" cy="712.8" r="3.5"/><circle cx="464.7" cy="725.9" r="3.5"/><circle cx="515.3" cy="710.6" r="3.5"/><circle cx="486.0" cy="723.1" r="3.5"/><circle cx="474.2" cy="704.5" r="3.5"/><circle cx="481.5" cy="733.9" r="3.5"/><circle cx="470.3" cy="716.7" r="3.5"/><circle cx="496.8" cy="736.4" r="3.5"/><circle cx="469.8" cy="711.2" r="3.5"/><circle cx="487.7" cy="742.6" r="3.5"/><circle cx="466.5" cy="725.3" r="3.5"/><circle cx="507.2" cy="728.5" r="3.5"/><circle cx="474.2" cy="704.1" r="3.5"/><circle cx="498.6" cy="733.2" r="3.5"/><circle cx="468.1" cy="729.7" r="3.5"/><circle cx="539.0" cy="715.7" r="3.5"/><circle cx="478.3" cy="711.8" r="3.5"/><circle cx="524.6" cy="724.8" r="3.5"/><circle cx="470.1" cy="709.3" r="3.5"/><circle cx="477.3" cy="716.7" r="3.5"/><circle cx="472.9" cy="712.9" r="3.5"/><circle cx="488.5" cy="711.8" r="3.5"/><circle cx="513.3" cy="713.2" r="3.5"/><circle cx="470.4" cy="704.2" r="3.5"/><circle cx="486.8" cy="717.1" r="3.5"/><circle cx="518.1" cy="720.9" r="3.5"/><circle cx="533.0" cy="714.5" r="3.5"/><circle cx="529.5" cy="717.6" r="3.5"/><circle cx="468.1" cy="703.7" r="3.5"/><circle cx="484.9" cy="731.8" r="3.5"/><circle cx="512.0" cy="718.0" r="3.5"/><circle cx="493.3" cy="707.6" r="3.5"/><circle cx="503.9" cy="730.0" r="3.5"/><circle cx="467.6" cy="729.4" r="3.5"/><circle cx="502.3" cy="708.0" r="3.5"/><circle cx="507.6" cy="729.1" r="3.5"/><circle cx="503.3" cy="709.3" r="3.5"/><circle cx="508.5" cy="715.3" r="3.5"/><circle cx="476.8" cy="714.0" r="3.5"/><circle cx="469.3" cy="709.5" r="3.5"/><circle cx="456.7" cy="730.4" r="3.5"/><circle cx="509.6" cy="726.8" r="3.5"/><circle cx="465.3" cy="734.6" r="3.5"/><circle cx="486.0" cy="716.1" r="3.5"/><circle cx="532.7" cy="717.4" r="3.5"/><circle cx="490.8" cy="710.4" r="3.5"/><circle cx="481.1" cy="726.5" r="3.5"/><circle cx="513.6" cy="739.1" r="3.5"/><circle cx="491.2" cy="730.6" r="3.5"/><circle cx="508.2" cy="706.6" r="3.5"/><circle cx="510.3" cy="721.9" r="3.5"/><circle cx="457.4" cy="725.6" r="3.5"/><circle cx="491.8" cy="711.5" r="3.5"/><circle cx="463.9" cy="736.2" r="3.5"/><circle cx="462.2" cy="737.7" r="3.5"/><circle cx="522.6" cy="727.4" r="3.5"/><circle cx="478.5" cy="712.0" r="3.5"/><circle cx="515.1" cy="744.2" r="3.5"/><circle cx="488.3" cy="746.0" r="3.5"/><circle cx="469.8" cy="722.8" r="3.5"/><circle cx="527.8" cy="719.9" r="3.5"/><circle cx="459.8" cy="717.1" r="3.5"/><circle cx="517.9" cy="721.5" r="3.5"/><circle cx="487.4" cy="704.1" r="3.5"/><circle cx="499.2" cy="741.8" r="3.5"/><circle cx="490.5" cy="748.5" r="3.5"/><circle cx="475.8" cy="718.4" r="3.5"/><circle cx="503.2" cy="736.9" r="3.5"/><circle cx="487.1" cy="707.3" r="3.5"/><circle cx="510.0" cy="706.2" r="3.5"/><circle cx="520.5" cy="741.9" r="3.5"/><circle cx="493.0" cy="749.0" r="3.5"/><circle cx="452.1" cy="706.7" r="3.5"/><circle cx="530.3" cy="732.5" r="3.5"/><circle cx="498.3" cy="710.5" r="3.5"/><circle cx="482.0" cy="717.0" r="3.5"/><circle cx="450.1" cy="712.7" r="3.5"/><circle cx="496.5" cy="722.2" r="3.5"/><circle cx="475.3" cy="705.4" r="3.5"/><circle cx="460.7" cy="720.0" r="3.5"/><circle cx="480.6" cy="719.4" r="3.5"/><circle cx="514.6" cy="713.3" r="3.5"/><circle cx="504.5" cy="720.6" r="3.5"/><circle cx="522.6" cy="722.3" r="3.5"/><circle cx="502.7" cy="723.2" r="3.5"/><circle cx="488.5" cy="737.3" r="3.5"/><circle cx="497.9" cy="722.5" r="3.5"/><circle cx="497.7" cy="726.9" r="3.5"/><circle cx="528.2" cy="717.9" r="3.5"/><circle cx="457.5" cy="715.1" r="3.5"/><circle cx="476.3" cy="739.1" r="3.5"/><circle cx="493.9" cy="704.1" r="3.5"/><circle cx="495.8" cy="731.6" r="3.5"/><circle cx="471.2" cy="708.5" r="3.5"/><circle cx="450.0" cy="727.3" r="3.5"/><circle cx="461.0" cy="725.8" r="3.5"/><circle cx="461.1" cy="704.1" r="3.5"/><circle cx="465.0" cy="712.8" r="3.5"/><circle cx="456.1" cy="728.2" r="3.5"/><circle cx="466.2" cy="716.0" r="3.5"/><circle cx="449.6" cy="708.4" r="3.5"/><circle cx="460.2" cy="739.3" r="3.5"/><circle cx="447.9" cy="723.4" r="3.5"/><circle cx="520.1" cy="742.4" r="3.5"/><circle cx="476.7" cy="714.9" r="3.5"/><circle cx="471.6" cy="721.6" r="3.5"/><circle cx="510.6" cy="742.8" r="3.5"/><circle cx="454.1" cy="704.0" r="3.5"/><circle cx="496.4" cy="735.8" r="3.5"/><circle cx="519.0" cy="736.5" r="3.5"/><circle cx="469.9" cy="732.8" r="3.5"/><circle cx="462.3" cy="716.2" r="3.5"/><circle cx="509.3" cy="724.3" r="3.5"/><circle cx="477.6" cy="721.3" r="3.5"/><circle cx="484.1" cy="733.4" r="3.5"/><circle cx="458.5" cy="721.3" r="3.5"/><circle cx="481.0" cy="736.3" r="3.5"/><circle cx="509.1" cy="721.0" r="3.5"/><circle cx="523.3" cy="738.2" r="3.5"/><circle cx="491.0" cy="718.1" r="3.5"/><circle cx="508.0" cy="705.6" r="3.5"/><circle cx="476.7" cy="709.2" r="3.5"/><circle cx="469.4" cy="715.7" r="3.5"/><circle cx="483.2" cy="719.7" r="3.5"/><circle cx="497.8" cy="729.7" r="3.5"/><circle cx="508.7" cy="729.4" r="3.5"/><circle cx="489.9" cy="748.4" r="3.5"/><circle cx="516.3" cy="711.3" r="3.5"/><circle cx="460.8" cy="716.4" r="3.5"/><circle cx="487.9" cy="715.7" r="3.5"/></g><circle cx="402.5" cy="625.4" r="3.5" fill="#f58d3a" fill-opacity="0.8" stroke="#c2571a" stroke-width="1.4"/><circle cx="400.2" cy="633.1" r="3.5" fill="#f58d3a" fill-opacity="0.8" stroke="#c2571a" stroke-width="1.4"/><circle cx="396.6" cy="641.5" r="3.5" fill="#f58d3a" fill-opacity="0.8" stroke="#c2571a" stroke-width="1.4"/><circle cx="379.2" cy="646.0" r="3.5" fill="#f58d3a" fill-opacity="0.8" stroke="#c2571a" stroke-width="1.4"/><circle cx="419.5" cy="671.6" r="3.5" fill="#f58d3a" fill-opacity="0.8" stroke="#c2571a" stroke-width="1.4"/><circle cx="423.4" cy="675.2" r="3.5" fill="#f58d3a" fill-opacity="0.8" stroke="#c2571a" stroke-width="1.4"/><circle cx="378.4" cy="668.0" r="3.5" fill="#f58d3a" fill-opacity="0.8" stroke="#c2571a" stroke-width="1.4"/><circle cx="383.3" cy="672.1" r="3.5" fill="#f58d3a" fill-opacity="0.8" stroke="#c2571a" stroke-width="1.4"/><circle cx="392.9" cy="675.3" r="3.5" fill="#f58d3a" fill-opacity="0.8" stroke="#c2571a" stroke-width="1.4"/><circle cx="389.5" cy="673.5" r="3.5" fill="#f58d3a" fill-opacity="0.8" stroke="#c2571a" stroke-width="1.4"/><g fill="#3cc4e6" fill-opacity="0.4" stroke="#0a88a5" stroke-width="1.5"><circle cx="397.4" cy="654.2" r="3.5"/><circle cx="409.2" cy="661.6" r="3.5"/><circle cx="410.6" cy="657.7" r="3.5"/><circle cx="405.6" cy="658.9" r="3.5"/><circle cx="399.7" cy="661.3" r="3.5"/><circle cx="397.0" cy="658.5" r="3.5"/><circle cx="407.1" cy="660.8" r="3.5"/><circle cx="403.8" cy="657.3" r="3.5"/><circle cx="404.3" cy="657.6" r="3.5"/><circle cx="401.5" cy="658.6" r="3.5"/><circle cx="414.0" cy="660.6" r="3.5"/><circle cx="404.4" cy="664.2" r="3.5"/><circle cx="414.0" cy="659.3" r="3.5"/><circle cx="395.9" cy="658.5" r="3.5"/><circle cx="406.9" cy="657.6" r="3.5"/><circle cx="401.5" cy="663.0" r="3.5"/><circle cx="404.7" cy="662.1" r="3.5"/><circle cx="401.3" cy="667.6" r="3.5"/><circle cx="411.3" cy="660.7" r="3.5"/><circle cx="401.2" cy="664.5" r="3.5"/><circle cx="406.0" cy="654.8" r="3.5"/><circle cx="401.1" cy="666.3" r="3.5"/><circle cx="403.0" cy="658.7" r="3.5"/><circle cx="404.6" cy="660.3" r="3.5"/><circle cx="403.5" cy="649.9" r="3.5"/><circle cx="412.6" cy="661.6" r="3.5"/><circle cx="398.9" cy="665.9" r="3.5"/><circle cx="405.1" cy="660.6" r="3.5"/><circle cx="406.4" cy="669.2" r="3.5"/><circle cx="414.7" cy="654.9" r="3.5"/><circle cx="400.8" cy="664.8" r="3.5"/><circle cx="394.6" cy="659.0" r="3.5"/><circle cx="410.2" cy="666.2" r="3.5"/><circle cx="406.5" cy="650.1" r="3.5"/><circle cx="415.7" cy="663.5" r="3.5"/><circle cx="407.5" cy="663.2" r="3.5"/><circle cx="394.6" cy="652.6" r="3.5"/><circle cx="399.2" cy="659.2" r="3.5"/><circle cx="402.2" cy="663.6" r="3.5"/><circle cx="406.1" cy="662.0" r="3.5"/><circle cx="404.4" cy="662.0" r="3.5"/><circle cx="409.9" cy="659.9" r="3.5"/><circle cx="400.3" cy="662.8" r="3.5"/><circle cx="395.4" cy="654.8" r="3.5"/><circle cx="398.3" cy="662.1" r="3.5"/><circle cx="414.4" cy="664.7" r="3.5"/><circle cx="409.4" cy="661.8" r="3.5"/><circle cx="405.0" cy="658.0" r="3.5"/><circle cx="397.2" cy="653.4" r="3.5"/><circle cx="407.9" cy="664.1" r="3.5"/><circle cx="409.4" cy="669.1" r="3.5"/><circle cx="401.9" cy="666.3" r="3.5"/><circle cx="413.7" cy="660.5" r="3.5"/><circle cx="409.2" cy="659.6" r="3.5"/><circle cx="395.1" cy="661.2" r="3.5"/><circle cx="399.2" cy="661.1" r="3.5"/><circle cx="401.1" cy="662.3" r="3.5"/><circle cx="410.6" cy="658.6" r="3.5"/><circle cx="398.8" cy="660.5" r="3.5"/><circle cx="407.0" cy="662.8" r="3.5"/><circle cx="405.6" cy="649.7" r="3.5"/><circle cx="397.6" cy="667.9" r="3.5"/><circle cx="404.7" cy="652.1" r="3.5"/><circle cx="399.0" cy="652.5" r="3.5"/><circle cx="398.2" cy="667.0" r="3.5"/><circle cx="402.3" cy="666.7" r="3.5"/><circle cx="404.5" cy="652.1" r="3.5"/><circle cx="399.5" cy="654.6" r="3.5"/><circle cx="410.0" cy="661.0" r="3.5"/><circle cx="403.5" cy="668.7" r="3.5"/><circle cx="393.5" cy="669.7" r="3.5"/><circle cx="388.8" cy="675.0" r="3.5"/><circle cx="390.9" cy="672.2" r="3.5"/><circle cx="390.7" cy="672.6" r="3.5"/><circle cx="389.6" cy="674.4" r="3.5"/><circle cx="393.4" cy="673.7" r="3.5"/><circle cx="386.7" cy="674.8" r="3.5"/><circle cx="390.4" cy="672.3" r="3.5"/><circle cx="388.4" cy="672.6" r="3.5"/><circle cx="391.7" cy="669.5" r="3.5"/><circle cx="391.2" cy="672.2" r="3.5"/><circle cx="393.9" cy="669.7" r="3.5"/><circle cx="394.4" cy="668.0" r="3.5"/><circle cx="395.8" cy="668.4" r="3.5"/></g><circle cx="405.9" cy="632.8" r="3.5" fill="#46c3e3" fill-opacity="0.8" stroke="#0c8aa7" stroke-width="1.4"/><circle cx="379.2" cy="681.8" r="3.5" fill="#46c3e3" fill-opacity="0.8" stroke="#0c8aa7" stroke-width="1.4"/><circle cx="383.7" cy="681.0" r="3.5" fill="#46c3e3" fill-opacity="0.8" stroke="#0c8aa7" stroke-width="1.4"/><circle cx="376.0" cy="661.6" r="3.5" fill="#46c3e3" fill-opacity="0.8" stroke="#0c8aa7" stroke-width="1.4"/><circle cx="384.5" cy="652.3" r="3.5" fill="#46c3e3" fill-opacity="0.8" stroke="#0c8aa7" stroke-width="1.4"/><circle cx="389.3" cy="658.0" r="3.5" fill="#46c3e3" fill-opacity="0.8" stroke="#0c8aa7" stroke-width="1.4"/><circle cx="384.5" cy="665.2" r="3.5" fill="#46c3e3" fill-opacity="0.8" stroke="#0c8aa7" stroke-width="1.4"/><circle cx="411.5" cy="651.1" r="3.5" fill="#46c3e3" fill-opacity="0.8" stroke="#0c8aa7" stroke-width="1.4"/><circle cx="395.4" cy="651.1" r="3.5" fill="#46c3e3" fill-opacity="0.8" stroke="#0c8aa7" stroke-width="1.4"/><circle cx="402.6" cy="649.5" r="3.5" fill="#46c3e3" fill-opacity="0.8" stroke="#0c8aa7" stroke-width="1.4"/><circle cx="414.7" cy="660.8" r="3.5" fill="#46c3e3" fill-opacity="0.8" stroke="#0c8aa7" stroke-width="1.4"/><circle cx="389.4" cy="768.6" r="3.5" fill="#f58d3a" fill-opacity="0.8" stroke="#c2571a" stroke-width="1.4"/><circle cx="381.4" cy="762.9" r="3.5" fill="#46c3e3" fill-opacity="0.8" stroke="#0c8aa7" stroke-width="1.4"/><circle cx="383.0" cy="763.3" r="3.5" fill="#46c3e3" fill-opacity="0.8" stroke="#0c8aa7" stroke-width="1.4"/><circle cx="384.6" cy="763.9" r="3.5" fill="#46c3e3" fill-opacity="0.8" stroke="#0c8aa7" stroke-width="1.4"/><circle cx="387.1" cy="765.1" r="3.5" fill="#46c3e3" fill-opacity="0.8" stroke="#0c8aa7" stroke-width="1.4"/><circle cx="388.5" cy="766.9" r="3.5" fill="#46c3e3" fill-opacity="0.8" stroke="#0c8aa7" stroke-width="1.4"/><circle cx="504.5" cy="775.3" r="3.5" fill="#e3e436" fill-opacity="0.8" stroke="#a5a712" stroke-width="1.4"/><circle cx="558.0" cy="690.8" r="3.5" fill="#46c3e3" fill-opacity="0.8" stroke="#0c8aa7" stroke-width="1.4"/><circle cx="498.0" cy="700.0" r="3.5" fill="#46c3e3" fill-opacity="0.8" stroke="#0c8aa7" stroke-width="1.4"/><circle cx="510.3" cy="698.0" r="3.5" fill="#46c3e3" fill-opacity="0.8" stroke="#0c8aa7" stroke-width="1.4"/><circle cx="543.6" cy="714.6" r="3.5" fill="#46c3e3" fill-opacity="0.8" stroke="#0c8aa7" stroke-width="1.4"/><circle cx="441.9" cy="728.5" r="3.5" fill="#46c3e3" fill-opacity="0.8" stroke="#0c8aa7" stroke-width="1.4"/><circle cx="653.1" cy="690.9" r="3.5" fill="#46c3e3" fill-opacity="0.8" stroke="#0c8aa7" stroke-width="1.4"/><circle cx="663.3" cy="698.1" r="3.5" fill="#46c3e3" fill-opacity="0.8" stroke="#0c8aa7" stroke-width="1.4"/><circle cx="658.5" cy="732.5" r="3.5" fill="#46c3e3" fill-opacity="0.8" stroke="#0c8aa7" stroke-width="1.4"/><circle cx="686.6" cy="683.6" r="3.5" fill="#46c3e3" fill-opacity="0.8" stroke="#0c8aa7" stroke-width="1.4"/><circle cx="674.6" cy="693.4" r="3.5" fill="#46c3e3" fill-opacity="0.8" stroke="#0c8aa7" stroke-width="1.4"/><circle cx="669.9" cy="698.1" r="3.5" fill="#46c3e3" fill-opacity="0.8" stroke="#0c8aa7" stroke-width="1.4"/><circle cx="681.2" cy="695.8" r="3.5" fill="#46c3e3" fill-opacity="0.8" stroke="#0c8aa7" stroke-width="1.4"/><circle cx="684.8" cy="701.1" r="3.5" fill="#46c3e3" fill-opacity="0.8" stroke="#0c8aa7" stroke-width="1.4"/><circle cx="682.1" cy="706.0" r="3.5" fill="#46c3e3" fill-opacity="0.8" stroke="#0c8aa7" stroke-width="1.4"/><circle cx="677.1" cy="714.6" r="3.5" fill="#46c3e3" fill-opacity="0.8" stroke="#0c8aa7" stroke-width="1.4"/><circle cx="700.9" cy="698.1" r="3.5" fill="#46c3e3" fill-opacity="0.8" stroke="#0c8aa7" stroke-width="1.4"/><circle cx="703.6" cy="706.9" r="3.5" fill="#46c3e3" fill-opacity="0.8" stroke="#0c8aa7" stroke-width="1.4"/><circle cx="711.6" cy="713.1" r="3.5" fill="#46c3e3" fill-opacity="0.8" stroke="#0c8aa7" stroke-width="1.4"/><circle cx="666.9" cy="700.2" r="3.5" fill="#46c3e3" fill-opacity="0.8" stroke="#0c8aa7" stroke-width="1.4"/><circle cx="672.5" cy="695.0" r="3.5" fill="#46c3e3" fill-opacity="0.8" stroke="#0c8aa7" stroke-width="1.4"/><circle cx="480.4" cy="753.4" r="3.5" fill="#46c3e3" fill-opacity="0.8" stroke="#0c8aa7" stroke-width="1.4"/><circle cx="478.6" cy="765.6" r="3.5" fill="#46c3e3" fill-opacity="0.8" stroke="#0c8aa7" stroke-width="1.4"/><circle cx="492.0" cy="762.4" r="3.5" fill="#46c3e3" fill-opacity="0.8" stroke="#0c8aa7" stroke-width="1.4"/><circle cx="487.4" cy="765.6" r="3.5" fill="#46c3e3" fill-opacity="0.8" stroke="#0c8aa7" stroke-width="1.4"/><circle cx="489.3" cy="768.6" r="3.5" fill="#46c3e3" fill-opacity="0.8" stroke="#0c8aa7" stroke-width="1.4"/><circle cx="532.1" cy="766.9" r="3.5" fill="#46c3e3" fill-opacity="0.8" stroke="#0c8aa7" stroke-width="1.4"/><circle cx="540.2" cy="767.2" r="3.5" fill="#46c3e3" fill-opacity="0.8" stroke="#0c8aa7" stroke-width="1.4"/><circle cx="547.9" cy="769.2" r="3.5" fill="#46c3e3" fill-opacity="0.8" stroke="#0c8aa7" stroke-width="1.4"/><circle cx="551.1" cy="768.6" r="3.5" fill="#46c3e3" fill-opacity="0.8" stroke="#0c8aa7" stroke-width="1.4"/><circle cx="549.5" cy="769.0" r="3.5" fill="#46c3e3" fill-opacity="0.8" stroke="#0c8aa7" stroke-width="1.4"/><circle cx="523.7" cy="787.8" r="3.5" fill="#46c3e3" fill-opacity="0.8" stroke="#0c8aa7" stroke-width="1.4"/><circle cx="528.2" cy="753.4" r="3.5" fill="#46c3e3" fill-opacity="0.8" stroke="#0c8aa7" stroke-width="1.4"/><circle cx="524.5" cy="752.0" r="3.5" fill="#46c3e3" fill-opacity="0.8" stroke="#0c8aa7" stroke-width="1.4"/><circle cx="763.2" cy="757.9" r="3.5" fill="#46c3e3" fill-opacity="0.8" stroke="#0c8aa7" stroke-width="1.4"/><circle cx="845.6" cy="795.9" r="3.5" fill="#46c3e3" fill-opacity="0.8" stroke="#0c8aa7" stroke-width="1.4"/><circle cx="933.3" cy="867.6" r="3.5" fill="#46c3e3" fill-opacity="0.8" stroke="#0c8aa7" stroke-width="1.4"/><circle cx="508.5" cy="771.9" r="3.5" fill="#46c3e3" fill-opacity="0.8" stroke="#0c8aa7" stroke-width="1.4"/>
<rect x="381.8" y="865" width="6.1" height="6.1" fill="#f25022"/>
<rect x="388.5" y="865" width="6.1" height="6.1" fill="#7fba00"/>
<rect x="381.8" y="871.7" width="6.1" height="6.1" fill="#00a4ef"/>
<rect x="388.5" y="871.7" width="6.1" height="6.1" fill="#ffb900"/>
<text x="397.2" y="875.2" font-size="11.6" fill="#737373" textLength="66.4" lengthAdjust="spacingAndGlyphs" stroke="#737373" stroke-width="0.25">Microsoft Bing</text>
<text x="737.2" y="878.3" font-size="10.8" fill="#000" textLength="147.5" lengthAdjust="spacingAndGlyphs" stroke="#fff" stroke-opacity="0.7" stroke-width="2.2" paint-order="stroke">© 2024 Microsoft Corporation</text>
<text x="893.4" y="878.3" font-size="10.8" fill="#33338f" textLength="30.8" lengthAdjust="spacingAndGlyphs" text-decoration="underline">Terms</text>
<circle cx="893.2" cy="629.2" r="20.2" fill="#fff" stroke="#111" stroke-width="1.8"/>
<path d="M882.2,629.2H904.2M893.2,618.2V640.2" stroke="#111" stroke-width="1.8" fill="none"/>
<circle cx="893.2" cy="698.9" r="20.2" fill="#fff" fill-opacity="0.96" stroke="#d2d2d2" stroke-width="1.4"/>
<path d="M882.2,698.9H904.2" stroke="#c9c9c9" stroke-width="1.8" fill="none"/></svg>
<div style="position:absolute;left:985.7px;top:582.5px;width:12px;height:12px;border-radius:50%;background:#e8302a"></div>
<div style="position:absolute;left:1033.4px;top:582.5px;width:12px;height:12px;border-radius:50%;background:#0a579a"></div>
<svg style="position:absolute;left:1040px;top:605px" width="465" height="250" viewBox="1040 605 465 250"><line x1="1043.3" y1="846.6" x2="1497.5" y2="846.6" stroke="#dedede" stroke-width="1.7" stroke-dasharray="0.01 7.55" stroke-linecap="round"/><line x1="1043.3" y1="789.0" x2="1497.5" y2="789.0" stroke="#dedede" stroke-width="1.7" stroke-dasharray="0.01 7.55" stroke-linecap="round"/><line x1="1043.3" y1="731.4" x2="1497.5" y2="731.4" stroke="#dedede" stroke-width="1.7" stroke-dasharray="0.01 7.55" stroke-linecap="round"/><line x1="1043.3" y1="673.7" x2="1497.5" y2="673.7" stroke="#dedede" stroke-width="1.7" stroke-dasharray="0.01 7.55" stroke-linecap="round"/><line x1="1043.3" y1="616.1" x2="1497.5" y2="616.1" stroke="#dedede" stroke-width="1.7" stroke-dasharray="0.01 7.55" stroke-linecap="round"/><rect x="1058.40" y="778.4" width="28.6" height="60.8" fill="#07559b"/><rect x="1058.40" y="839.2" width="28.6" height="7.4" fill="#eb2f27"/><rect x="1094.66" y="758.8" width="28.6" height="72.5" fill="#07559b"/><rect x="1094.66" y="831.3" width="28.6" height="15.3" fill="#eb2f27"/><rect x="1130.91" y="732.0" width="28.6" height="96.9" fill="#07559b"/><rect x="1130.91" y="828.9" width="28.6" height="17.7" fill="#eb2f27"/><rect x="1167.17" y="735.5" width="28.6" height="97.7" fill="#07559b"/><rect x="1167.17" y="833.2" width="28.6" height="13.4" fill="#eb2f27"/><rect x="1203.42" y="723.9" width="28.6" height="96.9" fill="#07559b"/><rect x="1203.42" y="820.8" width="28.6" height="25.8" fill="#eb2f27"/><rect x="1239.68" y="669.5" width="28.6" height="153.5" fill="#07559b"/><rect x="1239.68" y="823" width="28.6" height="23.6" fill="#eb2f27"/><rect x="1275.93" y="648.8" width="28.6" height="162.6" fill="#07559b"/><rect x="1275.93" y="811.4" width="28.6" height="35.2" fill="#eb2f27"/><rect x="1312.19" y="688" width="28.6" height="130.3" fill="#07559b"/><rect x="1312.19" y="818.3" width="28.6" height="28.3" fill="#eb2f27"/><rect x="1348.44" y="703.3" width="28.6" height="109.5" fill="#07559b"/><rect x="1348.44" y="812.8" width="28.6" height="33.8" fill="#eb2f27"/><rect x="1384.70" y="730.8" width="28.6" height="93.3" fill="#07559b"/><rect x="1384.70" y="824.1" width="28.6" height="22.5" fill="#eb2f27"/><rect x="1420.95" y="751.9" width="28.6" height="77.2" fill="#07559b"/><rect x="1420.95" y="829.1" width="28.6" height="17.5" fill="#eb2f27"/><rect x="1457.21" y="760.9" width="28.6" height="67.2" fill="#07559b"/><rect x="1457.21" y="828.1" width="28.6" height="18.5" fill="#eb2f27"/></svg>
<svg style="position:absolute;left:700px;top:910px" width="900" height="72" viewBox="700 910 900 72"><rect x="1345" y="922.3" width="4.8" height="1.5" fill="#555"/><rect x="1356.3" y="923.2" width="124.5" height="1" fill="#666"/><rect x="1416.2" y="917.1" width="4.8" height="12.5" fill="#5a5a5a"/><path d="M1488.1,923.2H1497.3M1492.7,918.6V927.8" stroke="#555" stroke-width="1.4" fill="none"/><rect x="1574.9" y="918.9" width="16.4" height="10.8" rx="1.8" fill="none" stroke="#666" stroke-width="1.2"/><path d="M1580,921.6H1577.8V926.9H1580M1586.2,921.6H1588.4V926.9H1586.2" fill="none" stroke="#666" stroke-width="1.2"/><rect x="1384" y="952.9" width="20.1" height="20.1" rx="1" fill="#444"/><path d="M1397.6,973V965.3H1400.2L1400.6,962.3H1397.6V960.4C1397.6,959.5 1397.9,958.9 1399.2,958.9H1400.7V956.2C1400.4,956.2 1399.5,956.1 1398.5,956.1C1396.3,956.1 1394.7,957.5 1394.7,960V962.3H1392.2V965.3H1394.7V973Z" fill="#eaeaea"/><path transform="translate(1428.8,951.2) scale(0.85)" d="M24 4.6c-.9.4-1.8.7-2.8.8 1-.6 1.8-1.6 2.2-2.7-1 .6-2 1-3.1 1.2-.9-1-2.2-1.6-3.6-1.6-2.7 0-4.9 2.2-4.9 4.9 0 .4 0 .8.1 1.1C7.7 8.1 4.1 6.1 1.7 3.1 1.2 3.9 1 4.700 1 5.600c0 1.700.9 3.200 2.200 4.100-.8 0-1.600-.2-2.200-.6v.1c0 2.400 1.700 4.400 3.900 4.800-.4.1-.8.200-1.300.2-.3 0-.6 0-.9-.1.600 2 2.400 3.400 4.600 3.400-1.700 1.300-3.800 2.100-6.100 2.100-.4 0-.8 0-1.200-.1 2.200 1.400 4.800 2.200 7.500 2.200 9.100 0 14-7.500 14-14v-.6c1-.7 1.800-1.600 2.500-2.500z" fill="#444"/><rect x="1473.9" y="952.9" width="20.1" height="20.1" rx="1.5" fill="#444"/><rect x="1477" y="960.6" width="2.9" height="9.3" fill="#eaeaea"/><circle cx="1478.45" cy="957.5" r="1.75" fill="#eaeaea"/><path d="M1482,960.6H1484.8V961.9C1485.3,961 1486.4,960.3 1487.9,960.3C1490.7,960.3 1491.3,962.1 1491.3,964.6V969.9H1488.4V965.2C1488.4,964 1488.4,962.7 1486.9,962.700C1485.400,962.700 1484.900,963.800 1484.900,965.100V969.900H1482Z" fill="#eaeaea"/><path d="M1532.5,958.9H1529.2C1528,958.9 1527.2,959.700 1527.200,960.900V967.500C1527.200,968.700 1528,969.500 1529.200,969.500H1537C1538.200,969.500 1539,968.700 1539,967.500V966.300" fill="none" stroke="#222" stroke-width="1.4"/><path d="M1536.300,956 1542.200,960.700 1536.300,965.400V962.600C1533.600,962.600 1531.800,963.700 1530.600,965.900C1530.800,962.100 1533,959.300 1536.300,958.900Z" fill="none" stroke="#222" stroke-width="1.3" stroke-linejoin="round"/><path d="M1577.2,970.3L1591,957.200M1584.500,957H1591.300V963.800M1577,963.700V970.500H1583.800" fill="none" stroke="#222" stroke-width="1.5"/><polyline points="721.2,955.4 714.6,961.5 721.2,967.600" fill="none" stroke="#c6c6c6" stroke-width="1.5"/><polyline points="817.1,955.4 823.6,961.5 817.1,967.600" fill="none" stroke="#333" stroke-width="1.5"/></svg>
<span class="t" style="left:23.55px;top:11.10px;font:700 48px 'Liberation Sans', sans-serif;color:#10599f;transform:scaleX(0.7841);transform-origin:0 0;-webkit-text-stroke:1.2px #10599f;">NTSB</span>
<span class="t" style="left:335.90px;top:36.70px;font:700 16.4px 'Liberation Sans', sans-serif;color:#fff;letter-spacing:-0.383px;">US Civil Aviation</span>
<span class="t" style="left:361.90px;top:58.70px;font:700 16.4px 'Liberation Sans', sans-serif;color:#fff;letter-spacing:-0.714px;">Summary</span>
<span class="t" style="left:542.40px;top:36.70px;font:400 16.4px 'Liberation Sans', sans-serif;color:#252a3a;letter-spacing:-0.108px;">US Civil Aviation</span>
<span class="t" style="left:577.40px;top:58.70px;font:400 16.4px 'Liberation Sans', sans-serif;color:#252a3a;letter-spacing:-0.084px;">Details</span>
<span class="t" style="left:733.80px;top:47.70px;font:400 16.4px 'Liberation Sans', sans-serif;color:#252a3a;letter-spacing:-0.164px;">Part 121 Air Carriers</span>
<span class="t" style="left:931.00px;top:36.70px;font:400 16.4px 'Liberation Sans', sans-serif;color:#252a3a;letter-spacing:0.107px;">Part 135 Commuter &amp;</span>
<span class="t" style="left:936.60px;top:58.70px;font:400 16.4px 'Liberation Sans', sans-serif;color:#252a3a;letter-spacing:-0.089px;">On-Demand Carriers</span>
<span class="t" style="left:1156.50px;top:47.70px;font:400 16.4px 'Liberation Sans', sans-serif;color:#252a3a;letter-spacing:-0.058px;">General Aviation</span>
<span class="t" style="left:1350.40px;top:31.80px;font:italic 400 12.2px 'Liberation Sans', sans-serif;color:#333;letter-spacing:0.306px;">Data updated December 28, 2023</span>
<span class="t" style="left:1572.73px;top:23.70px;font:400 26.5px 'Liberation Sans', sans-serif;color:#3a3a3a;transform:scaleX(0.9692);transform-origin:0 0;">?</span>
<span class="t" style="left:128.70px;top:131.60px;font:400 19.8px 'Liberation Sans', sans-serif;color:#252423;letter-spacing:0.420px;-webkit-text-stroke:0.22px #252423;">US Civil Aviation Accident Summary for Calendar Year</span>
<span class="t" style="left:637.40px;top:131.40px;font:400 19.8px 'Liberation Sans', sans-serif;color:#252423;letter-spacing:0.332px;-webkit-text-stroke:0.22px #252423;">2022</span>
<span class="t" style="left:479.30px;top:189.60px;font:400 16.6px 'Liberation Sans', sans-serif;color:#252423;letter-spacing:0.582px;-webkit-text-stroke:0.22px #252423;">Accidents</span>
<span class="t" style="left:746.40px;top:189.60px;font:400 16.6px 'Liberation Sans', sans-serif;color:#252423;letter-spacing:0.855px;-webkit-text-stroke:0.22px #252423;">Fatalities</span>
<span class="t" style="left:977.50px;top:189.60px;font:400 16.6px 'Liberation Sans', sans-serif;color:#252423;letter-spacing:0.877px;-webkit-text-stroke:0.22px #252423;">Flight Hours</span>
<span class="t" style="left:1188.20px;top:189.60px;font:400 16.6px 'Liberation Sans', sans-serif;color:#252423;letter-spacing:0.594px;-webkit-text-stroke:0.22px #252423;">Accidents per 100,000 Flight Hours</span>
<span class="t" style="left:449.00px;top:221.60px;font:400 15.8px 'Liberation Sans', sans-serif;color:#605e5c;letter-spacing:0.236px;">Total</span>
<span class="t" style="left:557.90px;top:221.60px;font:400 15.8px 'Liberation Sans', sans-serif;color:#605e5c;letter-spacing:-0.202px;">Fatal</span>
<span class="t" style="left:715.60px;top:221.60px;font:400 15.8px 'Liberation Sans', sans-serif;color:#605e5c;letter-spacing:0.236px;">Total</span>
<span class="t" style="left:805.00px;top:221.60px;font:400 15.8px 'Liberation Sans', sans-serif;color:#605e5c;letter-spacing:0.589px;">Aboard</span>
<span class="t" style="left:1260.00px;top:221.60px;font:400 15.8px 'Liberation Sans', sans-serif;color:#605e5c;letter-spacing:0.011px;">Total</span>
<span class="t" style="left:1424.10px;top:221.60px;font:400 15.8px 'Liberation Sans', sans-serif;color:#605e5c;letter-spacing:-0.227px;">Fatal</span>
<span class="t" style="left:225.30px;top:246.50px;font:400 16.6px 'Liberation Sans', sans-serif;color:#252423;letter-spacing:0.753px;-webkit-text-stroke:0.3px #252423;">Part 121 Air Carriers</span>
<span class="t" style="left:201.00px;top:288.90px;font:400 16.6px 'Liberation Sans', sans-serif;color:#252423;letter-spacing:0.687px;-webkit-text-stroke:0.3px #252423;">Part 135 Commuter and</span>
<span class="t" style="left:225.50px;top:310.60px;font:400 16.6px 'Liberation Sans', sans-serif;color:#252423;letter-spacing:0.730px;-webkit-text-stroke:0.3px #252423;">On-Demand Carriers</span>
<span class="t" style="left:262.60px;top:354.50px;font:400 16.6px 'Liberation Sans', sans-serif;color:#252423;letter-spacing:0.483px;-webkit-text-stroke:0.3px #252423;">General Aviation</span>
<span class="t" style="left:461.52px;top:243.80px;font:400 19.4px 'Liberation Sans', sans-serif;color:#252423;letter-spacing:-0.600px;">20</span>
<span class="t" style="left:580.60px;top:243.80px;font:400 19.4px 'Liberation Sans', sans-serif;color:#252423;letter-spacing:-0.600px;">1</span>
<span class="t" style="left:738.00px;top:243.80px;font:400 19.4px 'Liberation Sans', sans-serif;color:#252423;letter-spacing:-0.600px;">1</span>
<span class="t" style="left:846.40px;top:243.80px;font:400 19.4px 'Liberation Sans', sans-serif;color:#252423;letter-spacing:-0.600px;">0</span>
<span class="t" style="left:986.10px;top:243.40px;font:400 18.8px 'Liberation Sans', sans-serif;color:#252423;letter-spacing:-0.100px;">17,872,372</span>
<span class="t" style="left:1248.60px;top:243.80px;font:400 19.4px 'Liberation Sans', sans-serif;color:#252423;letter-spacing:-0.600px;">0.112</span>
<span class="t" style="left:1412.06px;top:243.80px;font:400 19.4px 'Liberation Sans', sans-serif;color:#252423;letter-spacing:-0.600px;">0.006</span>
<span class="t" style="left:462.52px;top:298.80px;font:400 19.4px 'Liberation Sans', sans-serif;color:#252423;letter-spacing:-0.600px;">53</span>
<span class="t" style="left:580.60px;top:298.80px;font:400 19.4px 'Liberation Sans', sans-serif;color:#252423;letter-spacing:-0.600px;">5</span>
<span class="t" style="left:727.82px;top:298.80px;font:400 19.4px 'Liberation Sans', sans-serif;color:#252423;letter-spacing:-0.600px;">18</span>
<span class="t" style="left:837.22px;top:298.80px;font:400 19.4px 'Liberation Sans', sans-serif;color:#252423;letter-spacing:-0.600px;">18</span>
<span class="t" style="left:996.44px;top:298.40px;font:400 18.8px 'Liberation Sans', sans-serif;color:#252423;letter-spacing:-0.100px;">4,835,934</span>
<span class="t" style="left:1247.16px;top:298.80px;font:400 19.4px 'Liberation Sans', sans-serif;color:#252423;letter-spacing:-0.600px;">1.096</span>
<span class="t" style="left:1412.06px;top:298.80px;font:400 19.4px 'Liberation Sans', sans-serif;color:#252423;letter-spacing:-0.600px;">0.103</span>
<span class="t" style="left:437.36px;top:353.80px;font:400 19.4px 'Liberation Sans', sans-serif;color:#252423;letter-spacing:-0.600px;">1,205</span>
<span class="t" style="left:559.23px;top:353.80px;font:400 19.4px 'Liberation Sans', sans-serif;color:#252423;letter-spacing:-0.600px;">214</span>
<span class="t" style="left:717.63px;top:353.80px;font:400 19.4px 'Liberation Sans', sans-serif;color:#252423;letter-spacing:-0.600px;">339</span>
<span class="t" style="left:827.03px;top:353.80px;font:400 19.4px 'Liberation Sans', sans-serif;color:#252423;letter-spacing:-0.600px;">339</span>
<span class="t" style="left:986.10px;top:353.40px;font:400 18.8px 'Liberation Sans', sans-serif;color:#252423;letter-spacing:-0.100px;">22,542,999</span>
<span class="t" style="left:1247.16px;top:353.80px;font:400 19.4px 'Liberation Sans', sans-serif;color:#252423;letter-spacing:-0.600px;">5.336</span>
<span class="t" style="left:1412.06px;top:353.80px;font:400 19.4px 'Liberation Sans', sans-serif;color:#252423;letter-spacing:-0.600px;">0.945</span>
<span class="t" style="left:261.10px;top:412.00px;font:700 16.8px 'Liberation Sans', sans-serif;color:#252423;letter-spacing:-0.206px;">US Civil Aviation</span>
<span class="t" style="left:434.49px;top:411.30px;font:700 17.8px 'Liberation Sans', sans-serif;color:#252423;letter-spacing:1.000px;">1,277</span>
<span class="t" style="left:559.22px;top:411.30px;font:700 17.8px 'Liberation Sans', sans-serif;color:#252423;letter-spacing:1.000px;">220</span>
<span class="t" style="left:716.62px;top:411.30px;font:700 17.8px 'Liberation Sans', sans-serif;color:#252423;letter-spacing:1.000px;">358</span>
<span class="t" style="left:826.02px;top:411.30px;font:700 17.8px 'Liberation Sans', sans-serif;color:#252423;letter-spacing:1.000px;">357</span>
<span class="t" style="left:129.90px;top:458.70px;font:400 14.2px 'Liberation Sans', sans-serif;color:#252423;letter-spacing:0.980px;-webkit-text-stroke:0.22px #252423;">Other Accidents in the United States</span>
<span class="t" style="left:211.60px;top:482.70px;font:400 13.9px 'Liberation Sans', sans-serif;color:#252423;letter-spacing:0.580px;-webkit-text-stroke:0.22px #252423;">Foreign Registered Aircraft</span>
<span class="t" style="left:249.90px;top:504.90px;font:400 13.9px 'Liberation Sans', sans-serif;color:#252423;letter-spacing:0.709px;-webkit-text-stroke:0.22px #252423;">Unregistered Aircraft</span>
<span class="t" style="left:466.20px;top:482.70px;font:400 14.4px 'Liberation Sans', sans-serif;color:#252423;letter-spacing:0.300px;">14</span>
<span class="t" style="left:582.60px;top:482.70px;font:400 14.4px 'Liberation Sans', sans-serif;color:#252423;letter-spacing:0.300px;">0</span>
<span class="t" style="left:741.30px;top:482.70px;font:400 14.4px 'Liberation Sans', sans-serif;color:#252423;letter-spacing:0.300px;">0</span>
<span class="t" style="left:849.80px;top:482.70px;font:400 14.4px 'Liberation Sans', sans-serif;color:#252423;letter-spacing:0.300px;">0</span>
<span class="t" style="left:474.50px;top:504.90px;font:400 14.4px 'Liberation Sans', sans-serif;color:#252423;letter-spacing:0.300px;">2</span>
<span class="t" style="left:582.60px;top:504.90px;font:400 14.4px 'Liberation Sans', sans-serif;color:#252423;letter-spacing:0.300px;">0</span>
<span class="t" style="left:741.30px;top:504.90px;font:400 14.4px 'Liberation Sans', sans-serif;color:#252423;letter-spacing:0.300px;">0</span>
<span class="t" style="left:849.80px;top:504.90px;font:400 14.4px 'Liberation Sans', sans-serif;color:#252423;letter-spacing:0.300px;">0</span>
<span class="t" style="left:125.80px;top:556.00px;font:400 17.6px 'Liberation Sans', sans-serif;color:#252423;letter-spacing:0.601px;-webkit-text-stroke:0.22px #252423;">Filters</span>
<span class="t" style="left:137.00px;top:595.00px;font:400 14.6px 'Liberation Sans', sans-serif;color:#252423;letter-spacing:0.022px;-webkit-text-stroke:0.22px #252423;">State/Region</span>
<span class="t" style="left:140.20px;top:629.60px;font:400 12.2px 'Liberation Sans', sans-serif;color:#333;letter-spacing:0.682px;">All</span>
<span class="t" style="left:209.40px;top:681.20px;font:400 13px 'Liberation Sans', sans-serif;color:#252423;letter-spacing:-0.289px;">Clear Filters</span>
<span class="t" style="left:188.00px;top:839.10px;font:400 13px 'Liberation Sans', sans-serif;color:#252423;letter-spacing:-0.020px;">View Accident List</span>
<span class="t" style="left:376.60px;top:550.90px;font:400 17.6px 'Liberation Sans', sans-serif;color:#252423;letter-spacing:0.071px;-webkit-text-stroke:0.22px #252423;">Accident Locations</span>
<span class="t" style="left:390.70px;top:581.60px;font:400 12.6px 'Liberation Sans', sans-serif;color:#605e5c;letter-spacing:-0.058px;">Part 121</span>
<span class="t" style="left:458.80px;top:581.60px;font:400 12.6px 'Liberation Sans', sans-serif;color:#605e5c;letter-spacing:0.114px;">Part 135</span>
<span class="t" style="left:529.40px;top:581.60px;font:400 12.6px 'Liberation Sans', sans-serif;color:#605e5c;letter-spacing:0.162px;">General Aviation</span>
<span class="t" style="left:985.90px;top:550.80px;font:400 17.6px 'Liberation Sans', sans-serif;color:#252423;letter-spacing:0.032px;-webkit-text-stroke:0.22px #252423;">Accidents by Month</span>
<span class="t" style="left:999.40px;top:581.10px;font:400 12.8px 'Liberation Sans', sans-serif;color:#605e5c;letter-spacing:-0.077px;">Fatal</span>
<span class="t" style="left:1047.50px;top:581.10px;font:400 12.8px 'Liberation Sans', sans-serif;color:#605e5c;letter-spacing:0.345px;">Non-Fatal</span>
<span class="t" style="left:1024.30px;top:839.90px;font:400 12px 'Liberation Sans', sans-serif;color:#605e5c;letter-spacing:0.200px;">0</span>
<span class="t" style="left:1017.43px;top:782.27px;font:400 12px 'Liberation Sans', sans-serif;color:#605e5c;letter-spacing:0.200px;">50</span>
<span class="t" style="left:1010.55px;top:724.65px;font:400 12px 'Liberation Sans', sans-serif;color:#605e5c;letter-spacing:0.200px;">100</span>
<span class="t" style="left:1010.55px;top:667.02px;font:400 12px 'Liberation Sans', sans-serif;color:#605e5c;letter-spacing:0.200px;">150</span>
<span class="t" style="left:1010.55px;top:609.40px;font:400 12px 'Liberation Sans', sans-serif;color:#605e5c;letter-spacing:0.200px;">200</span>
<span class="t" style="left:1063.26px;top:854.00px;font:400 12px 'Liberation Sans', sans-serif;color:#605e5c;letter-spacing:0.100px;">Jan</span>
<span class="t" style="left:1098.35px;top:854.00px;font:400 12px 'Liberation Sans', sans-serif;color:#605e5c;letter-spacing:0.100px;">Feb</span>
<span class="t" style="left:1134.78px;top:854.00px;font:400 12px 'Liberation Sans', sans-serif;color:#605e5c;letter-spacing:0.100px;">Mar</span>
<span class="t" style="left:1172.03px;top:854.00px;font:400 12px 'Liberation Sans', sans-serif;color:#605e5c;letter-spacing:0.100px;">Apr</span>
<span class="t" style="left:1206.29px;top:854.00px;font:400 12px 'Liberation Sans', sans-serif;color:#605e5c;letter-spacing:0.100px;">May</span>
<span class="t" style="left:1244.54px;top:854.00px;font:400 12px 'Liberation Sans', sans-serif;color:#605e5c;letter-spacing:0.100px;">Jun</span>
<span class="t" style="left:1282.79px;top:854.00px;font:400 12px 'Liberation Sans', sans-serif;color:#605e5c;letter-spacing:0.100px;">Jul</span>
<span class="t" style="left:1316.05px;top:854.00px;font:400 12px 'Liberation Sans', sans-serif;color:#605e5c;letter-spacing:0.100px;">Aug</span>
<span class="t" style="left:1351.80px;top:854.00px;font:400 12px 'Liberation Sans', sans-serif;color:#605e5c;letter-spacing:0.100px;">Sep</span>
<span class="t" style="left:1389.23px;top:854.00px;font:400 12px 'Liberation Sans', sans-serif;color:#605e5c;letter-spacing:0.100px;">Oct</span>
<span class="t" style="left:1424.48px;top:854.00px;font:400 12px 'Liberation Sans', sans-serif;color:#605e5c;letter-spacing:0.100px;">Nov</span>
<span class="t" style="left:1460.74px;top:854.00px;font:400 12px 'Liberation Sans', sans-serif;color:#605e5c;letter-spacing:0.100px;">Dec</span>
<span class="t" style="left:1249.30px;top:873.70px;font:400 14.2px 'Liberation Sans', sans-serif;color:#252423;letter-spacing:1.590px;-webkit-text-stroke:0.15px #252423;">Month</span>
<span class="t" style="left:998.00px;top:752.30px;font:400 14.2px 'Liberation Sans', sans-serif;color:#252423;letter-spacing:1.023px;transform:rotate(-90deg);transform-origin:0.00px 13.00px;-webkit-text-stroke:0.15px #252423;">Accidents</span>
<span class="t" style="left:1514.40px;top:914.60px;font:400 14.4px 'Liberation Sans', sans-serif;color:#666;letter-spacing:-0.270px;">100%</span>
<span class="t" style="left:26.00px;top:953.40px;font:400 17.8px 'Liberation Sans', sans-serif;color:#1a6b66;letter-spacing:0.096px;text-decoration:underline;text-decoration-thickness:1.2px;text-underline-offset:2px;">Microsoft Power BI</span>
<span class="t" style="left:746.60px;top:952.60px;font:400 17.6px 'Liberation Sans', sans-serif;color:#111;letter-spacing:-0.347px;-webkit-text-stroke:0.35px #111;">1 of 5</span>
</body></html>
